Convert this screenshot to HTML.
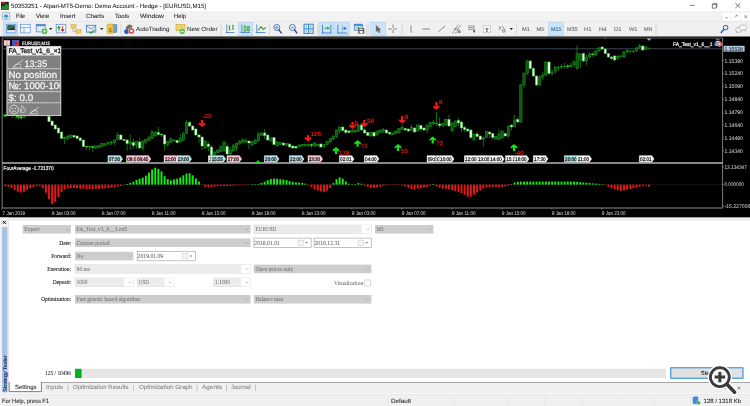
<!DOCTYPE html>
<html lang="en"><head><meta charset="utf-8"><title>50353251 - Alpari-MT5-Demo: Demo Account - Hedge - [EURUSD,M15]</title>
<style>html,body{margin:0;padding:0;background:#fff;overflow:hidden}svg{display:block;will-change:transform;transform:translateZ(0)}</style></head>
<body><svg width="750" height="406" viewBox="0 0 750 406" text-rendering="geometricPrecision">
<rect x="0" y="0" width="750" height="11" fill="#ffffff" />
<rect x="0" y="11.2" width="750" height="10.3" fill="#f2f2f2" />
<rect x="0" y="21.5" width="750" height="15.5" fill="#f0f0f0" />
<line x1="0" y1="21.5" x2="750" y2="21.5" stroke="#e2e2e2" stroke-width="0.6" />
<rect x="1" y="1.8" width="7.8" height="8" fill="#16221a" />
<path d="M1.5 8 L3 5 L4.5 6.5 L6 3 L7.5 5 L8.7 3.5 L8.7 9.5 L1.5 9.5Z" fill="#2a8c2a"/>
<path d="M1.5 5 L3 3 L4.5 4.2 L5.5 2.5 L5.5 2 L1.5 2Z" fill="#b03030"/>
<text x="11" y="8" font-size="6" fill="#222" font-family="Liberation Sans, sans-serif" stroke="#222" stroke-width="0.06" textLength="195" lengthAdjust="spacingAndGlyphs" >50353251 - Alpari-MT5-Demo: Demo Account - Hedge - [EURUSD,M15]</text>
<line x1="689.7" y1="5.4" x2="694.7" y2="5.4" stroke="#333" stroke-width="0.6" />
<rect x="712.2" y="4.2" width="3.9" height="3.9" fill="none" stroke="#333" stroke-width="0.6" />
<path d="M713.2 4.2V3.3H717V7.1H716.1" fill="none" stroke="#333" stroke-width="0.5"/>
<path d="M735.4 3.2L740.3 8M740.3 3.2L735.4 8" stroke="#333" stroke-width="0.7"/>
<rect x="2.2" y="12.3" width="7.6" height="7.6" fill="#dfe8f2" stroke="#8a9bb0" stroke-width="0.6" rx="1"/>
<circle cx="6" cy="16.6" r="2.2" fill="#3d8fd0"/><path d="M4 17.5h4" stroke="#e8c84a" stroke-width="1"/>
<text x="16" y="18.1" font-size="6" fill="#222" font-family="Liberation Sans, sans-serif" stroke="#222" stroke-width="0.06" textLength="9" lengthAdjust="spacingAndGlyphs" >File</text>
<text x="36" y="18.1" font-size="6" fill="#222" font-family="Liberation Sans, sans-serif" stroke="#222" stroke-width="0.06" textLength="13" lengthAdjust="spacingAndGlyphs" >View</text>
<text x="60" y="18.1" font-size="6" fill="#222" font-family="Liberation Sans, sans-serif" stroke="#222" stroke-width="0.06" textLength="15.5" lengthAdjust="spacingAndGlyphs" >Insert</text>
<text x="86" y="18.1" font-size="6" fill="#222" font-family="Liberation Sans, sans-serif" stroke="#222" stroke-width="0.06" textLength="18" lengthAdjust="spacingAndGlyphs" >Charts</text>
<text x="115" y="18.1" font-size="6" fill="#222" font-family="Liberation Sans, sans-serif" stroke="#222" stroke-width="0.06" textLength="14" lengthAdjust="spacingAndGlyphs" >Tools</text>
<text x="140" y="18.1" font-size="6" fill="#222" font-family="Liberation Sans, sans-serif" stroke="#222" stroke-width="0.06" textLength="24" lengthAdjust="spacingAndGlyphs" >Window</text>
<text x="174" y="18.1" font-size="6" fill="#222" font-family="Liberation Sans, sans-serif" stroke="#222" stroke-width="0.06" textLength="12" lengthAdjust="spacingAndGlyphs" >Help</text>
<rect x="723" y="12.8" width="7.8" height="8" fill="#fff" />
<rect x="731.9" y="12.8" width="8" height="8" fill="#fff" />
<rect x="741" y="12.8" width="9" height="8" fill="#fff" />
<line x1="725.4" y1="17.9" x2="727.8" y2="17.9" stroke="#6a86a8" stroke-width="0.8" />
<path d="M734.6 17.6l2.4-2.4M735.6 15h1.6v1.6" fill="none" stroke="#6a86a8" stroke-width="0.7"/>
<path d="M744.4 15.4L747 18M747 15.4L744.4 18" stroke="#5a7a9e" stroke-width="0.8"/>
<rect x="3.6" y="22.6" width="14.000000000000002" height="13.2" fill="#cce4f7" stroke="#9ccaf0" stroke-width="0.5" />
<rect x="6.3" y="24.3" width="9.6" height="8.6" fill="#e8f0fa" stroke="#4a86c8" stroke-width="0.7" />
<rect x="7.3" y="25.3" width="7.6" height="4.8" fill="#2a3a3a" />
<path d="M7.8 29 L9.5 26.8 L11 28.2 L12.6 26.2 L14.4 27.6" fill="none" stroke="#5ad05a" stroke-width="0.7"/>
<rect x="20.6" y="24.3" width="9.6" height="8.6" fill="#f4f8fd" stroke="#5a96d8" stroke-width="0.7" />
<line x1="20.6" y1="27.6" x2="30.2" y2="27.6" stroke="#5a96d8" stroke-width="0.7" />
<line x1="24" y1="27.6" x2="24" y2="32.9" stroke="#5a96d8" stroke-width="0.7" />
<rect x="36.2" y="24.3" width="9" height="7.6" fill="#dce9f7" stroke="#4a86c8" stroke-width="0.7" />
<rect x="36.2" y="24.3" width="9" height="1.8" fill="#4a86c8" />
<circle cx="44.5" cy="31.2" r="3" fill="#35b035" stroke="#fff" stroke-width="0.4"/><path d="M42.8 31.2h3.4M44.5 29.5v3.4" stroke="#fff" stroke-width="0.8"/>
<path d="M49 28 h3.4 l-1.7 2z" fill="#222"/>
<rect x="56.2" y="24.3" width="9.6" height="8.6" fill="#f4f8fd" stroke="#4a86c8" stroke-width="0.7" />
<path d="M59 31.5v-5M57.6 28l1.4-1.8 1.4 1.8z" stroke="#2aa02a" stroke-width="0.9" fill="#2aa02a"/>
<path d="M62.6 26v5M61.2 29.6l1.4 1.8 1.4-1.8z" stroke="#d03030" stroke-width="0.9" fill="#d03030"/>
<rect x="71" y="24.6" width="5" height="3.6" fill="#f0d060" stroke="#c8a030" stroke-width="0.5" />
<rect x="76" y="29.6" width="5" height="3.6" fill="#f0d060" stroke="#c8a030" stroke-width="0.5" />
<path d="M73 28.2v3.2h3" fill="none" stroke="#888" stroke-width="0.5"/>
<rect x="86.4" y="25.3" width="9.4" height="6.8" fill="#e6f0fb" stroke="#3a7ac8" stroke-width="0.8" />
<path d="M86.4 26l4.7 3 4.7-3" fill="none" stroke="#3a7ac8" stroke-width="0.7"/>
<path d="M89 31.6l2 1.6 3.6-3.6" fill="none" stroke="#2aa02a" stroke-width="1.1"/>
<path d="M100 28 h3.4 l-1.7 2z" fill="#222"/>
<rect x="110.6" y="24.4" width="6.2" height="8" fill="#6aa0e0" stroke="#3a6ab0" stroke-width="0.5" rx="0.8"/>
<rect x="107.2" y="24" width="6" height="9.4" fill="#f0c848" stroke="#c09420" stroke-width="0.5" rx="0.8"/>
<text x="108.6" y="31.6" font-size="6" fill="#b07c00" font-family="Liberation Sans, sans-serif" font-weight="bold" >$</text>
<line x1="121" y1="23.5" x2="121" y2="35" stroke="#c8c8c8" stroke-width="0.6" />
<path d="M125.6 27.4 l3.6-3 3.4 1.4 -1 3 -5 0.6z" fill="#6a6a6a"/><path d="M126.6 25.8l3.2-1.6" stroke="#9a9a9a" stroke-width="0.6"/>
<circle cx="126.6" cy="31.4" r="2.5" fill="#2a62c8"/>
<circle cx="131.4" cy="31" r="3" fill="#e02818" stroke="#fff" stroke-width="0.5"/><rect x="130.2" y="29.8" width="2.4" height="2.4" fill="#fff"/>
<text x="136" y="31" font-size="6" fill="#333" font-family="Liberation Sans, sans-serif" stroke="#333" stroke-width="0.06" textLength="33.5" lengthAdjust="spacingAndGlyphs" >AutoTrading</text>
<rect x="176" y="24.5" width="9" height="6.2" fill="#ecd468" stroke="#c8a838" stroke-width="0.6" />
<circle cx="182.2" cy="31.4" r="2.8" fill="#35b035" stroke="#fff" stroke-width="0.4"/><path d="M180.6 31.4h3.2M182.2 29.8v3.2" stroke="#fff" stroke-width="0.8"/>
<text x="187" y="31" font-size="6" fill="#333" font-family="Liberation Sans, sans-serif" stroke="#333" stroke-width="0.06" textLength="30.5" lengthAdjust="spacingAndGlyphs" >New Order</text>
<line x1="221" y1="23.5" x2="221" y2="35" stroke="#c8c8c8" stroke-width="0.6" />
<path d="M226.8 24.4v8.8M225.6 32.5h8.8" stroke="#3a7ac8" stroke-width="0.8" fill="none"/>
<path d="M229.6 25.4v5M228.6 26.6h1M229.6 29.4h1M233 24.8v5M232 25.8h1M233 28.8h1" stroke="#2aa02a" stroke-width="1" fill="none"/>
<rect x="238.7" y="22.6" width="14.100000000000023" height="13.2" fill="#cce4f7" stroke="#9ccaf0" stroke-width="0.5" />
<path d="M241.8 24.4v8.8M240.6 32.5h9.4" stroke="#3a7ac8" stroke-width="0.8" fill="none"/>
<rect x="244.1" y="26.3" width="1.9" height="4.8" fill="#eaf8ea" stroke="#2aa02a" stroke-width="0.7" />
<line x1="245.05" y1="25" x2="245.05" y2="32" stroke="#2aa02a" stroke-width="0.6" />
<rect x="247.6" y="26.8" width="1.9" height="4" fill="#eaf8ea" stroke="#2aa02a" stroke-width="0.7" />
<line x1="248.55" y1="25.6" x2="248.55" y2="31.6" stroke="#2aa02a" stroke-width="0.6" />
<path d="M256.8 24.4v8.8M255.6 32.5h9.8" stroke="#3a7ac8" stroke-width="0.8" fill="none"/>
<path d="M258.4 30.2l2.6-3.6 2.5 2.8 2.2-2" stroke="#2aa02a" stroke-width="1.1" fill="none"/>
<line x1="269.5" y1="23.5" x2="269.5" y2="35" stroke="#c8c8c8" stroke-width="0.6" />
<circle cx="276.8" cy="27.5" r="3" fill="#e8f2fc" stroke="#3a6ab8" stroke-width="0.9"/>
<path d="M279.0 29.9l2.2 3" stroke="#2a4a90" stroke-width="1.5" stroke-linecap="round"/>
<path d="M275.2 27.6h3.2M276.8 26v3.2" stroke="#3a6ab8" stroke-width="0.7"/>
<circle cx="292.4" cy="27.5" r="3" fill="#e8f2fc" stroke="#3a6ab8" stroke-width="0.9"/>
<path d="M294.59999999999997 29.9l2.2 3" stroke="#2a4a90" stroke-width="1.5" stroke-linecap="round"/>
<path d="M290.79999999999995 27.6h3.2" stroke="#3a6ab8" stroke-width="0.7"/>
<rect x="304" y="24.2" width="9.2" height="9.2" fill="#e4f0fc" stroke="#2f80dc" stroke-width="1" />
<line x1="308.6" y1="24.2" x2="308.6" y2="33.4" stroke="#2f80dc" stroke-width="1" />
<line x1="304" y1="28.8" x2="313.2" y2="28.8" stroke="#2f80dc" stroke-width="1" />
<path d="M305.3 27.3l1.8-1.6" stroke="#3aa03a" stroke-width="0.8"/>
<path d="M309.9 27.3l1.8-1.6" stroke="#3aa03a" stroke-width="0.8"/>
<path d="M305.3 31.900000000000002l1.8-1.6" stroke="#3aa03a" stroke-width="0.8"/>
<path d="M309.9 31.900000000000002l1.8-1.6" stroke="#3aa03a" stroke-width="0.8"/>
<line x1="317.5" y1="23.5" x2="317.5" y2="35" stroke="#c8c8c8" stroke-width="0.6" />
<rect x="319.1" y="22.6" width="14.399999999999977" height="13.2" fill="#cce4f7" stroke="#9ccaf0" stroke-width="0.5" />
<path d="M322.5 24.8v8.4M330.8 24.8v8.4M321.6 33h10" stroke="#3a7ac8" stroke-width="0.9" fill="none"/><path d="M324.6 28.2h3" stroke="#2aa02a" stroke-width="1"/><path d="M327.2 26.6l2.6 1.6-2.6 1.6z" fill="#2aa02a"/>
<rect x="334.8" y="22.6" width="14.0" height="13.2" fill="#cce4f7" stroke="#9ccaf0" stroke-width="0.5" />
<path d="M337.9 24.6v8.6M337 33h10" stroke="#3a7ac8" stroke-width="0.9" fill="none"/><path d="M342.4 25v7.6" stroke="#7aa8e0" stroke-width="0.7"/><path d="M343 28.4h2" stroke="#2a6ad0" stroke-width="1"/><path d="M344.4 26.8l2.6 1.6-2.6 1.6z" fill="#2a6ad0"/>
<line x1="350" y1="23.5" x2="350" y2="35" stroke="#c8c8c8" stroke-width="0.6" />
<rect x="354.3" y="24.2" width="8" height="6" fill="#d4e6fa" stroke="#3a80d8" stroke-width="0.8" />
<rect x="354.3" y="24.2" width="8" height="1.6" fill="#3a80d8" />
<path d="M356 28.4l2-1.6 1.6 1 2-1.6" fill="none" stroke="#3aa03a" stroke-width="0.7"/>
<rect x="358.4" y="28.4" width="5.6" height="5" fill="#6a6a6a" stroke="#4a4a4a" stroke-width="0.5" />
<rect x="359.6" y="31" width="3.2" height="2.4" fill="#f0f0f0" />
<rect x="359.6" y="28.6" width="3" height="1.4" fill="#d8d8d8" />
<line x1="366.9" y1="23.5" x2="366.9" y2="35" stroke="#c8c8c8" stroke-width="0.6" />
<line x1="368.3" y1="23.5" x2="368.3" y2="35" stroke="#c8c8c8" stroke-width="0.6" />
<rect x="370.8" y="22.6" width="14.599999999999966" height="13.2" fill="#cce4f7" stroke="#9ccaf0" stroke-width="0.5" />
<path d="M376.2 25.6l0 6 1.5-1.3 1.1 2.4 1-0.5-1.1-2.3 1.9-0.1z" fill="#6a6a6a" stroke="#444" stroke-width="0.4"/>
<path d="M393 24.6v8.8M388.4 29h9.2" stroke="#444" stroke-width="0.6" stroke-dasharray="3.4 1.8"/>
<line x1="402" y1="23.5" x2="402" y2="35" stroke="#c8c8c8" stroke-width="0.6" />
<line x1="411" y1="25.6" x2="411" y2="32.6" stroke="#555" stroke-width="0.7" />
<line x1="422.5" y1="29" x2="430" y2="29" stroke="#555" stroke-width="0.7" />
<line x1="438.5" y1="31.8" x2="445" y2="26" stroke="#555" stroke-width="0.7" />
<path d="M452.6 33.4l5.4-8.6M455.6 33.4l5.2-8.6" stroke="#444" stroke-width="0.7" stroke-dasharray="1.6 0.7"/><path d="M454 29h4" stroke="#444" stroke-width="0.6"/>
<text x="458.2" y="33.4" font-size="3.6" fill="#222" font-family="Liberation Sans, sans-serif" font-weight="bold" >E</text>
<path d="M468 26h7M468 27.7h7M468 29.4h7" stroke="#9a9a9a" stroke-width="1"/><path d="M472.8 30.6h2.6l-1.3 2.4z" fill="#333"/>
<rect x="483.5" y="25.6" width="7" height="7" fill="#fafafa" stroke="#888" stroke-width="0.6" stroke-dasharray="0.8 0.6"/>
<text x="485.3" y="31.6" font-size="5.6" fill="#333" font-family="Liberation Sans, sans-serif" stroke="#333" stroke-width="0.06" font-weight="bold" >T</text>
<path d="M498.8 26.4l2.2 1.6-2.2 1.6" fill="none" stroke="#555" stroke-width="0.7"/><circle cx="503.8" cy="30.8" r="1.4" fill="none" stroke="#555" stroke-width="0.7"/><path d="M502 26.2l2.2 2.2" stroke="#555" stroke-width="0.7"/>
<path d="M509.6 28 h3.4 l-1.7 2z" fill="#222"/>
<line x1="516.5" y1="23.5" x2="516.5" y2="35" stroke="#c8c8c8" stroke-width="0.6" />
<rect x="548.6" y="22.6" width="14.799999999999955" height="13.2" fill="#cce4f7" stroke="#9ccaf0" stroke-width="0.5" />
<text x="522" y="31" font-size="5.6" fill="#666" font-family="Liberation Sans, sans-serif" stroke="#666" stroke-width="0.06" textLength="8" lengthAdjust="spacingAndGlyphs" >M1</text>
<text x="536.5" y="31" font-size="5.6" fill="#666" font-family="Liberation Sans, sans-serif" stroke="#666" stroke-width="0.06" textLength="8.0" lengthAdjust="spacingAndGlyphs" >M5</text>
<text x="551" y="31" font-size="5.6" fill="#2a5a9a" font-family="Liberation Sans, sans-serif" stroke="#2a5a9a" stroke-width="0.06" textLength="10.5" lengthAdjust="spacingAndGlyphs" >M15</text>
<text x="567" y="31" font-size="5.6" fill="#666" font-family="Liberation Sans, sans-serif" stroke="#666" stroke-width="0.06" textLength="10.5" lengthAdjust="spacingAndGlyphs" >M30</text>
<text x="584" y="31" font-size="5.6" fill="#666" font-family="Liberation Sans, sans-serif" stroke="#666" stroke-width="0.06" textLength="7.5" lengthAdjust="spacingAndGlyphs" >H1</text>
<text x="599" y="31" font-size="5.6" fill="#666" font-family="Liberation Sans, sans-serif" stroke="#666" stroke-width="0.06" textLength="7.5" lengthAdjust="spacingAndGlyphs" >H4</text>
<text x="614" y="31" font-size="5.6" fill="#666" font-family="Liberation Sans, sans-serif" stroke="#666" stroke-width="0.06" textLength="7.5" lengthAdjust="spacingAndGlyphs" >D1</text>
<text x="629" y="31" font-size="5.6" fill="#666" font-family="Liberation Sans, sans-serif" stroke="#666" stroke-width="0.06" textLength="8.5" lengthAdjust="spacingAndGlyphs" >W1</text>
<text x="644" y="31" font-size="5.6" fill="#666" font-family="Liberation Sans, sans-serif" stroke="#666" stroke-width="0.06" textLength="8.5" lengthAdjust="spacingAndGlyphs" >MN</text>
<line x1="656" y1="23.5" x2="656" y2="35" stroke="#c8c8c8" stroke-width="0.6" />
<circle cx="725.6" cy="27.6" r="2.3" fill="#eaf2fc" stroke="#2a5ab8" stroke-width="1"/><path d="M723.8 29.6l-2.6 3" stroke="#2a5ab8" stroke-width="1.5" stroke-linecap="round"/>
<ellipse cx="739" cy="29.8" rx="3.4" ry="2.6" fill="#f4f4f4" stroke="#999" stroke-width="0.6"/><path d="M737 31.6l-0.8 2 2.2-1.4z" fill="#bbb"/>
<ellipse cx="743" cy="27.6" rx="3.6" ry="2.8" fill="#fafafa" stroke="#999" stroke-width="0.6"/><path d="M744 30l1.4 2 0.4-2.2z" fill="#bbb"/>
<rect x="0" y="36.5" width="750" height="181.5" fill="#000" />
<line x1="2" y1="38" x2="722.6" y2="38" stroke="#707070" stroke-width="0.8" />
<line x1="603.6" y1="38" x2="606.4" y2="38" stroke="#d04040" stroke-width="0.8" />
<line x1="2.2" y1="38" x2="2.2" y2="208" stroke="#9a9a9a" stroke-width="0.8" />
<line x1="722.6" y1="38" x2="722.6" y2="208" stroke="#9a9a9a" stroke-width="0.8" />
<line x1="2" y1="163" x2="722.6" y2="163" stroke="#b4b4b4" stroke-width="1.3" />
<line x1="2" y1="208" x2="722.6" y2="208" stroke="#9a9a9a" stroke-width="0.9" />
<line x1="2.5" y1="48.8" x2="722.6" y2="48.8" stroke="#485664" stroke-width="0.8" />
<rect x="4" y="40.3" width="5.9" height="5.2" fill="#f6d4dc" stroke="#dc98a4" stroke-width="0.5" />
<line x1="7" y1="40.3" x2="7" y2="45.5" stroke="#c86878" stroke-width="0.6" />
<rect x="12.4" y="40.3" width="6.6" height="5.2" fill="#3a50c8" stroke="#6a80e0" stroke-width="0.5" />
<rect x="15.8" y="41" width="3" height="4.3" fill="#d03030" />
<text x="22" y="44.9" font-size="4.8" fill="#f0f0f0" font-family="Liberation Sans, sans-serif" stroke="#f0f0f0" stroke-width="0.2" textLength="28" lengthAdjust="spacingAndGlyphs" >EURUSD,M15</text>
<g id="candles">
<line x1="2.9" y1="113.4" x2="2.9" y2="117.2" stroke="#12a012" stroke-width="0.7" />
<rect x="4.1" y="114.4" width="1.9" height="2.2" fill="#0c560c" stroke="#1da01d" stroke-width="0.5" />
<rect x="11.8" y="116.6" width="1.6" height="1" fill="#1da01d" />
<rect x="14.8" y="117.6" width="1.6" height="1" fill="#1da01d" />
<rect x="17.8" y="118.2" width="1.6" height="1" fill="#1da01d" />
<rect x="20.6" y="118" width="1.6" height="1" fill="#1da01d" />
<line x1="5.25" y1="115.02" x2="5.25" y2="116.12" stroke="#12a012" stroke-width="0.7" />
<rect x="4.1" y="115.32" width="2.3" height="0.7" fill="#ecffec" stroke="#3cc43c" stroke-width="0.5" />
<line x1="17.75" y1="113.87" x2="17.75" y2="117.25" stroke="#12a012" stroke-width="0.7" />
<rect x="16.6" y="116.43" width="2.3" height="0.7" fill="#ecffec" stroke="#3cc43c" stroke-width="0.5" />
<line x1="20.88" y1="114.33" x2="20.88" y2="118.03" stroke="#12a012" stroke-width="0.7" />
<rect x="19.73" y="116.93" width="2.3" height="0.78" fill="#ecffec" stroke="#3cc43c" stroke-width="0.5" />
<line x1="24.0" y1="114.22" x2="24.0" y2="118.03" stroke="#12a012" stroke-width="0.7" />
<rect x="22.85" y="115.97" width="2.3" height="1.74" fill="#0c560c" stroke="#1da01d" stroke-width="0.5" />
<line x1="49.0" y1="116.1" x2="49.0" y2="121.9" stroke="#12a012" stroke-width="0.7" />
<rect x="47.85" y="116.5" width="2.3" height="5.0" fill="#ecffec" stroke="#3cc43c" stroke-width="0.5" />
<line x1="52.12" y1="120.6" x2="52.12" y2="125.9" stroke="#12a012" stroke-width="0.7" />
<rect x="50.98" y="121" width="2.3" height="4.5" fill="#ecffec" stroke="#3cc43c" stroke-width="0.5" />
<line x1="55.25" y1="124.6" x2="55.25" y2="129.4" stroke="#12a012" stroke-width="0.7" />
<rect x="54.1" y="125" width="2.3" height="4" fill="#ecffec" stroke="#3cc43c" stroke-width="0.5" />
<line x1="58.38" y1="127.6" x2="58.38" y2="133.4" stroke="#12a012" stroke-width="0.7" />
<rect x="57.23" y="128" width="2.3" height="5" fill="#ecffec" stroke="#3cc43c" stroke-width="0.5" />
<line x1="61.5" y1="131.6" x2="61.5" y2="138.9" stroke="#12a012" stroke-width="0.7" />
<rect x="60.35" y="132" width="2.3" height="6.5" fill="#ecffec" stroke="#3cc43c" stroke-width="0.5" />
<line x1="64.62" y1="136.5" x2="64.62" y2="144" stroke="#12a012" stroke-width="0.7" />
<rect x="63.48" y="137.6" width="2.3" height="0.8" fill="#0c560c" stroke="#1da01d" stroke-width="0.5" />
<line x1="67.75" y1="135.5" x2="67.75" y2="140" stroke="#12a012" stroke-width="0.7" />
<rect x="66.6" y="136" width="2.3" height="2.5" fill="#0c560c" stroke="#1da01d" stroke-width="0.5" />
<line x1="70.88" y1="134.5" x2="70.88" y2="138" stroke="#12a012" stroke-width="0.7" />
<rect x="69.72" y="135" width="2.3" height="2.5" fill="#0c560c" stroke="#1da01d" stroke-width="0.5" />
<line x1="74.0" y1="135" x2="74.0" y2="138" stroke="#12a012" stroke-width="0.7" />
<rect x="72.85" y="135.5" width="2.3" height="1.5" fill="#ecffec" stroke="#3cc43c" stroke-width="0.5" />
<line x1="77.12" y1="135.5" x2="77.12" y2="139" stroke="#12a012" stroke-width="0.7" />
<rect x="75.97" y="136" width="2.3" height="2.5" fill="#ecffec" stroke="#3cc43c" stroke-width="0.5" />
<line x1="80.25" y1="137.5" x2="80.25" y2="141" stroke="#12a012" stroke-width="0.7" />
<rect x="79.1" y="138" width="2.3" height="2.5" fill="#ecffec" stroke="#3cc43c" stroke-width="0.5" />
<line x1="83.38" y1="139.5" x2="83.38" y2="147" stroke="#12a012" stroke-width="0.7" />
<rect x="82.22" y="140" width="2.3" height="6.5" fill="#ecffec" stroke="#3cc43c" stroke-width="0.5" />
<line x1="86.5" y1="146" x2="86.5" y2="150" stroke="#12a012" stroke-width="0.7" />
<rect x="85.35" y="146.2" width="2.3" height="0.7" fill="#ecffec" stroke="#3cc43c" stroke-width="0.5" />
<line x1="89.62" y1="146" x2="89.62" y2="150" stroke="#12a012" stroke-width="0.7" />
<rect x="88.47" y="146.2" width="2.3" height="0.7" fill="#0c560c" stroke="#1da01d" stroke-width="0.5" />
<line x1="92.75" y1="146" x2="92.75" y2="152" stroke="#12a012" stroke-width="0.7" />
<rect x="91.6" y="146.6" width="2.3" height="0.7" fill="#ecffec" stroke="#3cc43c" stroke-width="0.5" />
<line x1="95.88" y1="145.5" x2="95.88" y2="149" stroke="#12a012" stroke-width="0.7" />
<rect x="94.72" y="146" width="2.3" height="2" fill="#0c560c" stroke="#1da01d" stroke-width="0.5" />
<line x1="99.0" y1="145" x2="99.0" y2="148" stroke="#12a012" stroke-width="0.7" />
<rect x="97.85" y="145.5" width="2.3" height="2.0" fill="#0c560c" stroke="#1da01d" stroke-width="0.5" />
<line x1="102.12" y1="143" x2="102.12" y2="147" stroke="#12a012" stroke-width="0.7" />
<rect x="100.97" y="143.5" width="2.3" height="3.0" fill="#0c560c" stroke="#1da01d" stroke-width="0.5" />
<line x1="105.25" y1="143" x2="105.25" y2="146" stroke="#12a012" stroke-width="0.7" />
<rect x="104.1" y="143.8" width="2.3" height="1.4" fill="#0c560c" stroke="#1da01d" stroke-width="0.5" />
<line x1="108.38" y1="142" x2="108.38" y2="145" stroke="#12a012" stroke-width="0.7" />
<rect x="107.22" y="142.7" width="2.3" height="0.7" fill="#0c560c" stroke="#1da01d" stroke-width="0.5" />
<line x1="111.5" y1="141" x2="111.5" y2="145" stroke="#12a012" stroke-width="0.7" />
<rect x="110.35" y="142.2" width="2.3" height="0.7" fill="#0c560c" stroke="#1da01d" stroke-width="0.5" />
<line x1="114.62" y1="139.5" x2="114.62" y2="145" stroke="#12a012" stroke-width="0.7" />
<rect x="113.47" y="140" width="2.3" height="2.5" fill="#0c560c" stroke="#1da01d" stroke-width="0.5" />
<line x1="117.75" y1="132" x2="117.75" y2="140" stroke="#12a012" stroke-width="0.7" />
<rect x="116.6" y="135" width="2.3" height="4.5" fill="#0c560c" stroke="#1da01d" stroke-width="0.5" />
<line x1="120.88" y1="134.5" x2="120.88" y2="140" stroke="#12a012" stroke-width="0.7" />
<rect x="119.72" y="135" width="2.3" height="4.5" fill="#ecffec" stroke="#3cc43c" stroke-width="0.5" />
<line x1="124.0" y1="139" x2="124.0" y2="141" stroke="#12a012" stroke-width="0.7" />
<rect x="122.85" y="139.5" width="2.3" height="1.0" fill="#ecffec" stroke="#3cc43c" stroke-width="0.5" />
<line x1="127.12" y1="139.5" x2="127.12" y2="151" stroke="#12a012" stroke-width="0.7" />
<rect x="125.97" y="140" width="2.3" height="3.5" fill="#ecffec" stroke="#3cc43c" stroke-width="0.5" />
<line x1="130.25" y1="134.5" x2="130.25" y2="150" stroke="#12a012" stroke-width="0.7" />
<rect x="129.1" y="142" width="2.3" height="2" fill="#0c560c" stroke="#1da01d" stroke-width="0.5" />
<line x1="133.38" y1="139" x2="133.38" y2="149" stroke="#12a012" stroke-width="0.7" />
<rect x="132.22" y="142.5" width="2.3" height="3.0" fill="#ecffec" stroke="#3cc43c" stroke-width="0.5" />
<line x1="136.5" y1="141" x2="136.5" y2="148.5" stroke="#12a012" stroke-width="0.7" />
<rect x="135.35" y="141.5" width="2.3" height="3.5" fill="#0c560c" stroke="#1da01d" stroke-width="0.5" />
<line x1="139.62" y1="138" x2="139.62" y2="148.5" stroke="#12a012" stroke-width="0.7" />
<rect x="138.47" y="142" width="2.3" height="6" fill="#ecffec" stroke="#3cc43c" stroke-width="0.5" />
<line x1="142.75" y1="139.5" x2="142.75" y2="151" stroke="#12a012" stroke-width="0.7" />
<rect x="141.6" y="141.5" width="2.3" height="6.5" fill="#0c560c" stroke="#1da01d" stroke-width="0.5" />
<line x1="145.88" y1="139" x2="145.88" y2="144.5" stroke="#12a012" stroke-width="0.7" />
<rect x="144.72" y="139.5" width="2.3" height="2.5" fill="#0c560c" stroke="#1da01d" stroke-width="0.5" />
<line x1="149.0" y1="136.5" x2="149.0" y2="141" stroke="#12a012" stroke-width="0.7" />
<rect x="147.85" y="137" width="2.3" height="3.5" fill="#0c560c" stroke="#1da01d" stroke-width="0.5" />
<line x1="152.12" y1="130" x2="152.12" y2="139" stroke="#12a012" stroke-width="0.7" />
<rect x="150.97" y="132" width="2.3" height="6.5" fill="#0c560c" stroke="#1da01d" stroke-width="0.5" />
<line x1="155.25" y1="131.5" x2="155.25" y2="136.5" stroke="#12a012" stroke-width="0.7" />
<rect x="154.1" y="132" width="2.3" height="4" fill="#0c560c" stroke="#1da01d" stroke-width="0.5" />
<line x1="158.38" y1="127" x2="158.38" y2="135" stroke="#12a012" stroke-width="0.7" />
<rect x="157.22" y="132.5" width="2.3" height="2.0" fill="#ecffec" stroke="#3cc43c" stroke-width="0.5" />
<line x1="161.5" y1="133" x2="161.5" y2="137" stroke="#12a012" stroke-width="0.7" />
<rect x="160.35" y="134.2" width="2.3" height="0.7" fill="#ecffec" stroke="#3cc43c" stroke-width="0.5" />
<line x1="164.62" y1="134.5" x2="164.62" y2="150.5" stroke="#12a012" stroke-width="0.7" />
<rect x="163.47" y="135" width="2.3" height="9" fill="#ecffec" stroke="#3cc43c" stroke-width="0.5" />
<line x1="167.75" y1="141" x2="167.75" y2="147" stroke="#12a012" stroke-width="0.7" />
<rect x="166.6" y="141.5" width="2.3" height="3.0" fill="#0c560c" stroke="#1da01d" stroke-width="0.5" />
<line x1="170.88" y1="137" x2="170.88" y2="143" stroke="#12a012" stroke-width="0.7" />
<rect x="169.72" y="139" width="2.3" height="3.5" fill="#0c560c" stroke="#1da01d" stroke-width="0.5" />
<line x1="174.0" y1="139.5" x2="174.0" y2="141.5" stroke="#12a012" stroke-width="0.7" />
<rect x="172.85" y="140" width="2.3" height="1" fill="#0c560c" stroke="#1da01d" stroke-width="0.5" />
<line x1="177.12" y1="140" x2="177.12" y2="143" stroke="#12a012" stroke-width="0.7" />
<rect x="175.97" y="140.5" width="2.3" height="2.0" fill="#ecffec" stroke="#3cc43c" stroke-width="0.5" />
<line x1="180.25" y1="134" x2="180.25" y2="142.5" stroke="#12a012" stroke-width="0.7" />
<rect x="179.1" y="138.5" width="2.3" height="3.5" fill="#0c560c" stroke="#1da01d" stroke-width="0.5" />
<line x1="183.38" y1="132.5" x2="183.38" y2="141" stroke="#12a012" stroke-width="0.7" />
<rect x="182.22" y="133" width="2.3" height="7.5" fill="#0c560c" stroke="#1da01d" stroke-width="0.5" />
<line x1="186.5" y1="120" x2="186.5" y2="134" stroke="#12a012" stroke-width="0.7" />
<rect x="185.35" y="122.5" width="2.3" height="11.0" fill="#0c560c" stroke="#1da01d" stroke-width="0.5" />
<line x1="189.62" y1="121" x2="189.62" y2="126.5" stroke="#12a012" stroke-width="0.7" />
<rect x="188.47" y="122.5" width="2.3" height="3.5" fill="#ecffec" stroke="#3cc43c" stroke-width="0.5" />
<line x1="192.75" y1="125.5" x2="192.75" y2="130.5" stroke="#12a012" stroke-width="0.7" />
<rect x="191.6" y="126" width="2.3" height="4" fill="#ecffec" stroke="#3cc43c" stroke-width="0.5" />
<line x1="195.88" y1="128.5" x2="195.88" y2="135.5" stroke="#12a012" stroke-width="0.7" />
<rect x="194.72" y="129" width="2.3" height="6" fill="#ecffec" stroke="#3cc43c" stroke-width="0.5" />
<line x1="199.0" y1="134.5" x2="199.0" y2="143" stroke="#12a012" stroke-width="0.7" />
<rect x="197.85" y="135" width="2.3" height="2" fill="#ecffec" stroke="#3cc43c" stroke-width="0.5" />
<line x1="202.12" y1="136.5" x2="202.12" y2="150" stroke="#12a012" stroke-width="0.7" />
<rect x="200.97" y="137" width="2.3" height="9" fill="#ecffec" stroke="#3cc43c" stroke-width="0.5" />
<line x1="205.25" y1="140.5" x2="205.25" y2="148.5" stroke="#12a012" stroke-width="0.7" />
<rect x="204.1" y="141" width="2.3" height="7" fill="#0c560c" stroke="#1da01d" stroke-width="0.5" />
<line x1="208.38" y1="142" x2="208.38" y2="151" stroke="#12a012" stroke-width="0.7" />
<rect x="207.22" y="144" width="2.3" height="2.5" fill="#ecffec" stroke="#3cc43c" stroke-width="0.5" />
<line x1="211.5" y1="145" x2="211.5" y2="155.5" stroke="#12a012" stroke-width="0.7" />
<rect x="210.35" y="147" width="2.3" height="8" fill="#ecffec" stroke="#3cc43c" stroke-width="0.5" />
<line x1="214.62" y1="151.5" x2="214.62" y2="155" stroke="#12a012" stroke-width="0.7" />
<rect x="213.47" y="152" width="2.3" height="2.5" fill="#0c560c" stroke="#1da01d" stroke-width="0.5" />
<line x1="217.75" y1="149.5" x2="217.75" y2="153" stroke="#12a012" stroke-width="0.7" />
<rect x="216.6" y="150" width="2.3" height="2.5" fill="#0c560c" stroke="#1da01d" stroke-width="0.5" />
<line x1="220.88" y1="145" x2="220.88" y2="152" stroke="#12a012" stroke-width="0.7" />
<rect x="219.72" y="147" width="2.3" height="4.5" fill="#0c560c" stroke="#1da01d" stroke-width="0.5" />
<line x1="224.0" y1="141.5" x2="224.0" y2="151.5" stroke="#12a012" stroke-width="0.7" />
<rect x="222.85" y="142" width="2.3" height="9" fill="#0c560c" stroke="#1da01d" stroke-width="0.5" />
<line x1="227.12" y1="143" x2="227.12" y2="154.5" stroke="#12a012" stroke-width="0.7" />
<rect x="225.97" y="146.5" width="2.3" height="7.5" fill="#ecffec" stroke="#3cc43c" stroke-width="0.5" />
<line x1="230.25" y1="147" x2="230.25" y2="155" stroke="#12a012" stroke-width="0.7" />
<rect x="229.1" y="150" width="2.3" height="4" fill="#0c560c" stroke="#1da01d" stroke-width="0.5" />
<line x1="233.38" y1="144.5" x2="233.38" y2="151.5" stroke="#12a012" stroke-width="0.7" />
<rect x="232.22" y="145" width="2.3" height="6" fill="#0c560c" stroke="#1da01d" stroke-width="0.5" />
<line x1="236.5" y1="143" x2="236.5" y2="151" stroke="#12a012" stroke-width="0.7" />
<rect x="235.35" y="143.5" width="2.3" height="4.5" fill="#0c560c" stroke="#1da01d" stroke-width="0.5" />
<line x1="239.62" y1="140.5" x2="239.62" y2="144.5" stroke="#12a012" stroke-width="0.7" />
<rect x="238.47" y="141" width="2.3" height="3" fill="#0c560c" stroke="#1da01d" stroke-width="0.5" />
<line x1="242.75" y1="138" x2="242.75" y2="143" stroke="#12a012" stroke-width="0.7" />
<rect x="241.6" y="140" width="2.3" height="2.5" fill="#0c560c" stroke="#1da01d" stroke-width="0.5" />
<line x1="245.88" y1="138" x2="245.88" y2="142.5" stroke="#12a012" stroke-width="0.7" />
<rect x="244.72" y="140.5" width="2.3" height="1.5" fill="#0c560c" stroke="#1da01d" stroke-width="0.5" />
<line x1="249.0" y1="140.5" x2="249.0" y2="149" stroke="#12a012" stroke-width="0.7" />
<rect x="247.85" y="141" width="2.3" height="2" fill="#ecffec" stroke="#3cc43c" stroke-width="0.5" />
<line x1="252.12" y1="141" x2="252.12" y2="145.5" stroke="#12a012" stroke-width="0.7" />
<rect x="250.97" y="141.5" width="2.3" height="3.5" fill="#0c560c" stroke="#1da01d" stroke-width="0.5" />
<line x1="255.25" y1="139.5" x2="255.25" y2="144" stroke="#12a012" stroke-width="0.7" />
<rect x="254.1" y="140" width="2.3" height="3.5" fill="#0c560c" stroke="#1da01d" stroke-width="0.5" />
<line x1="258.38" y1="132" x2="258.38" y2="141.5" stroke="#12a012" stroke-width="0.7" />
<rect x="257.23" y="134" width="2.3" height="7" fill="#0c560c" stroke="#1da01d" stroke-width="0.5" />
<line x1="261.5" y1="132.5" x2="261.5" y2="136" stroke="#12a012" stroke-width="0.7" />
<rect x="260.35" y="133" width="2.3" height="2.5" fill="#0c560c" stroke="#1da01d" stroke-width="0.5" />
<line x1="264.62" y1="129" x2="264.62" y2="139" stroke="#12a012" stroke-width="0.7" />
<rect x="263.48" y="133" width="2.3" height="2.5" fill="#ecffec" stroke="#3cc43c" stroke-width="0.5" />
<line x1="267.75" y1="134.5" x2="267.75" y2="140.5" stroke="#12a012" stroke-width="0.7" />
<rect x="266.6" y="135" width="2.3" height="5" fill="#ecffec" stroke="#3cc43c" stroke-width="0.5" />
<line x1="270.88" y1="137.5" x2="270.88" y2="141.5" stroke="#12a012" stroke-width="0.7" />
<rect x="269.73" y="138" width="2.3" height="3" fill="#0c560c" stroke="#1da01d" stroke-width="0.5" />
<line x1="274.0" y1="137" x2="274.0" y2="145" stroke="#12a012" stroke-width="0.7" />
<rect x="272.85" y="137.5" width="2.3" height="7.0" fill="#ecffec" stroke="#3cc43c" stroke-width="0.5" />
<line x1="277.12" y1="141.5" x2="277.12" y2="146.5" stroke="#12a012" stroke-width="0.7" />
<rect x="275.98" y="142" width="2.3" height="4" fill="#0c560c" stroke="#1da01d" stroke-width="0.5" />
<line x1="280.25" y1="142" x2="280.25" y2="145" stroke="#12a012" stroke-width="0.7" />
<rect x="279.1" y="142.5" width="2.3" height="2.0" fill="#0c560c" stroke="#1da01d" stroke-width="0.5" />
<line x1="283.38" y1="142.5" x2="283.38" y2="145.5" stroke="#12a012" stroke-width="0.7" />
<rect x="282.23" y="143" width="2.3" height="2" fill="#ecffec" stroke="#3cc43c" stroke-width="0.5" />
<line x1="286.5" y1="143" x2="286.5" y2="146" stroke="#12a012" stroke-width="0.7" />
<rect x="285.35" y="143.5" width="2.3" height="2.0" fill="#0c560c" stroke="#1da01d" stroke-width="0.5" />
<line x1="289.62" y1="143.5" x2="289.62" y2="147.5" stroke="#12a012" stroke-width="0.7" />
<rect x="288.48" y="144" width="2.3" height="3" fill="#ecffec" stroke="#3cc43c" stroke-width="0.5" />
<line x1="292.75" y1="145.5" x2="292.75" y2="148.5" stroke="#12a012" stroke-width="0.7" />
<rect x="291.6" y="146" width="2.3" height="2" fill="#ecffec" stroke="#3cc43c" stroke-width="0.5" />
<line x1="295.88" y1="146" x2="295.88" y2="148.5" stroke="#12a012" stroke-width="0.7" />
<rect x="294.73" y="146.5" width="2.3" height="1.5" fill="#ecffec" stroke="#3cc43c" stroke-width="0.5" />
<line x1="299.0" y1="144.5" x2="299.0" y2="147.5" stroke="#12a012" stroke-width="0.7" />
<rect x="297.85" y="145" width="2.3" height="2" fill="#0c560c" stroke="#1da01d" stroke-width="0.5" />
<line x1="302.12" y1="144" x2="302.12" y2="146.5" stroke="#12a012" stroke-width="0.7" />
<rect x="300.98" y="144.5" width="2.3" height="1.5" fill="#0c560c" stroke="#1da01d" stroke-width="0.5" />
<line x1="305.25" y1="144" x2="305.25" y2="146.5" stroke="#12a012" stroke-width="0.7" />
<rect x="304.1" y="144.5" width="2.3" height="1.5" fill="#0c560c" stroke="#1da01d" stroke-width="0.5" />
<line x1="308.38" y1="143.5" x2="308.38" y2="147" stroke="#12a012" stroke-width="0.7" />
<rect x="307.23" y="144.7" width="2.3" height="0.7" fill="#0c560c" stroke="#1da01d" stroke-width="0.5" />
<line x1="311.5" y1="143.5" x2="311.5" y2="148" stroke="#12a012" stroke-width="0.7" />
<rect x="310.35" y="144.7" width="2.3" height="0.7" fill="#ecffec" stroke="#3cc43c" stroke-width="0.5" />
<line x1="314.62" y1="142" x2="314.62" y2="147" stroke="#12a012" stroke-width="0.7" />
<rect x="313.48" y="143" width="2.3" height="3" fill="#0c560c" stroke="#1da01d" stroke-width="0.5" />
<line x1="317.75" y1="143.5" x2="317.75" y2="146.5" stroke="#12a012" stroke-width="0.7" />
<rect x="316.6" y="144.7" width="2.3" height="0.7" fill="#0c560c" stroke="#1da01d" stroke-width="0.5" />
<line x1="320.88" y1="143.5" x2="320.88" y2="147.5" stroke="#12a012" stroke-width="0.7" />
<rect x="319.73" y="144" width="2.3" height="3" fill="#ecffec" stroke="#3cc43c" stroke-width="0.5" />
<line x1="324.0" y1="144" x2="324.0" y2="147.5" stroke="#12a012" stroke-width="0.7" />
<rect x="322.85" y="144.5" width="2.3" height="2.5" fill="#0c560c" stroke="#1da01d" stroke-width="0.5" />
<line x1="327.12" y1="141" x2="327.12" y2="145" stroke="#12a012" stroke-width="0.7" />
<rect x="325.98" y="141.5" width="2.3" height="3.0" fill="#0c560c" stroke="#1da01d" stroke-width="0.5" />
<line x1="330.25" y1="138" x2="330.25" y2="142.5" stroke="#12a012" stroke-width="0.7" />
<rect x="329.1" y="138.5" width="2.3" height="3.5" fill="#0c560c" stroke="#1da01d" stroke-width="0.5" />
<line x1="333.38" y1="135.5" x2="333.38" y2="140" stroke="#12a012" stroke-width="0.7" />
<rect x="332.23" y="136" width="2.3" height="3.5" fill="#0c560c" stroke="#1da01d" stroke-width="0.5" />
<line x1="336.5" y1="129.5" x2="336.5" y2="138" stroke="#12a012" stroke-width="0.7" />
<rect x="335.35" y="130" width="2.3" height="6.5" fill="#0c560c" stroke="#1da01d" stroke-width="0.5" />
<line x1="339.62" y1="126.5" x2="339.62" y2="134" stroke="#12a012" stroke-width="0.7" />
<rect x="338.48" y="127" width="2.3" height="4" fill="#0c560c" stroke="#1da01d" stroke-width="0.5" />
<line x1="342.75" y1="126.5" x2="342.75" y2="131" stroke="#12a012" stroke-width="0.7" />
<rect x="341.6" y="127" width="2.3" height="3.5" fill="#ecffec" stroke="#3cc43c" stroke-width="0.5" />
<line x1="345.88" y1="129.5" x2="345.88" y2="133" stroke="#12a012" stroke-width="0.7" />
<rect x="344.73" y="130" width="2.3" height="2.5" fill="#ecffec" stroke="#3cc43c" stroke-width="0.5" />
<line x1="349.0" y1="130.5" x2="349.0" y2="133" stroke="#12a012" stroke-width="0.7" />
<rect x="347.85" y="131" width="2.3" height="1.5" fill="#ecffec" stroke="#3cc43c" stroke-width="0.5" />
<line x1="352.12" y1="129.5" x2="352.12" y2="132.5" stroke="#12a012" stroke-width="0.7" />
<rect x="350.98" y="130" width="2.3" height="2" fill="#0c560c" stroke="#1da01d" stroke-width="0.5" />
<line x1="355.25" y1="129.5" x2="355.25" y2="132.5" stroke="#12a012" stroke-width="0.7" />
<rect x="354.1" y="130" width="2.3" height="2" fill="#0c560c" stroke="#1da01d" stroke-width="0.5" />
<line x1="358.38" y1="123.5" x2="358.38" y2="132" stroke="#12a012" stroke-width="0.7" />
<rect x="357.23" y="125" width="2.3" height="6.5" fill="#0c560c" stroke="#1da01d" stroke-width="0.5" />
<line x1="361.5" y1="124.5" x2="361.5" y2="130.5" stroke="#12a012" stroke-width="0.7" />
<rect x="360.35" y="125" width="2.3" height="5" fill="#ecffec" stroke="#3cc43c" stroke-width="0.5" />
<line x1="364.62" y1="128" x2="364.62" y2="133.5" stroke="#12a012" stroke-width="0.7" />
<rect x="363.48" y="130" width="2.3" height="3" fill="#ecffec" stroke="#3cc43c" stroke-width="0.5" />
<line x1="367.75" y1="132" x2="367.75" y2="136" stroke="#12a012" stroke-width="0.7" />
<rect x="366.6" y="132.5" width="2.3" height="3.0" fill="#ecffec" stroke="#3cc43c" stroke-width="0.5" />
<line x1="370.88" y1="132" x2="370.88" y2="136.5" stroke="#12a012" stroke-width="0.7" />
<rect x="369.73" y="132.5" width="2.3" height="3.5" fill="#0c560c" stroke="#1da01d" stroke-width="0.5" />
<line x1="374.0" y1="132" x2="374.0" y2="137.5" stroke="#12a012" stroke-width="0.7" />
<rect x="372.85" y="132.5" width="2.3" height="3.5" fill="#ecffec" stroke="#3cc43c" stroke-width="0.5" />
<line x1="377.12" y1="130.5" x2="377.12" y2="135.5" stroke="#12a012" stroke-width="0.7" />
<rect x="375.98" y="131" width="2.3" height="4" fill="#0c560c" stroke="#1da01d" stroke-width="0.5" />
<line x1="380.25" y1="129.5" x2="380.25" y2="133" stroke="#12a012" stroke-width="0.7" />
<rect x="379.1" y="130" width="2.3" height="2.5" fill="#0c560c" stroke="#1da01d" stroke-width="0.5" />
<line x1="383.38" y1="128" x2="383.38" y2="132.5" stroke="#12a012" stroke-width="0.7" />
<rect x="382.23" y="129.5" width="2.3" height="2.5" fill="#0c560c" stroke="#1da01d" stroke-width="0.5" />
<line x1="386.5" y1="129.5" x2="386.5" y2="133.5" stroke="#12a012" stroke-width="0.7" />
<rect x="385.35" y="130" width="2.3" height="3" fill="#ecffec" stroke="#3cc43c" stroke-width="0.5" />
<line x1="389.62" y1="132" x2="389.62" y2="134.5" stroke="#12a012" stroke-width="0.7" />
<rect x="388.48" y="132.5" width="2.3" height="1.5" fill="#ecffec" stroke="#3cc43c" stroke-width="0.5" />
<line x1="392.75" y1="132.5" x2="392.75" y2="135" stroke="#12a012" stroke-width="0.7" />
<rect x="391.6" y="133" width="2.3" height="1.5" fill="#0c560c" stroke="#1da01d" stroke-width="0.5" />
<line x1="395.88" y1="130.5" x2="395.88" y2="134" stroke="#12a012" stroke-width="0.7" />
<rect x="394.73" y="131" width="2.3" height="2.5" fill="#0c560c" stroke="#1da01d" stroke-width="0.5" />
<line x1="399.0" y1="128" x2="399.0" y2="133.5" stroke="#12a012" stroke-width="0.7" />
<rect x="397.85" y="128.5" width="2.3" height="4.5" fill="#0c560c" stroke="#1da01d" stroke-width="0.5" />
<line x1="402.12" y1="125" x2="402.12" y2="130" stroke="#12a012" stroke-width="0.7" />
<rect x="400.98" y="127.5" width="2.3" height="2.0" fill="#0c560c" stroke="#1da01d" stroke-width="0.5" />
<line x1="405.25" y1="128" x2="405.25" y2="130.5" stroke="#12a012" stroke-width="0.7" />
<rect x="404.1" y="128.5" width="2.3" height="1.5" fill="#ecffec" stroke="#3cc43c" stroke-width="0.5" />
<line x1="408.38" y1="128.5" x2="408.38" y2="131.5" stroke="#12a012" stroke-width="0.7" />
<rect x="407.23" y="129" width="2.3" height="2" fill="#ecffec" stroke="#3cc43c" stroke-width="0.5" />
<line x1="411.5" y1="124.5" x2="411.5" y2="131" stroke="#12a012" stroke-width="0.7" />
<rect x="410.35" y="127.5" width="2.3" height="3.0" fill="#0c560c" stroke="#1da01d" stroke-width="0.5" />
<line x1="414.62" y1="127.5" x2="414.62" y2="132.5" stroke="#12a012" stroke-width="0.7" />
<rect x="413.48" y="128" width="2.3" height="4" fill="#ecffec" stroke="#3cc43c" stroke-width="0.5" />
<line x1="417.75" y1="124.5" x2="417.75" y2="131.5" stroke="#12a012" stroke-width="0.7" />
<rect x="416.6" y="125" width="2.3" height="6" fill="#0c560c" stroke="#1da01d" stroke-width="0.5" />
<line x1="420.88" y1="125" x2="420.88" y2="131" stroke="#12a012" stroke-width="0.7" />
<rect x="419.73" y="125.5" width="2.3" height="3.5" fill="#ecffec" stroke="#3cc43c" stroke-width="0.5" />
<line x1="424.0" y1="127.5" x2="424.0" y2="130.5" stroke="#12a012" stroke-width="0.7" />
<rect x="422.85" y="128" width="2.3" height="2" fill="#ecffec" stroke="#3cc43c" stroke-width="0.5" />
<line x1="427.12" y1="124.5" x2="427.12" y2="133.5" stroke="#12a012" stroke-width="0.7" />
<rect x="425.98" y="125" width="2.3" height="5" fill="#0c560c" stroke="#1da01d" stroke-width="0.5" />
<line x1="430.25" y1="122" x2="430.25" y2="127" stroke="#12a012" stroke-width="0.7" />
<rect x="429.1" y="122.5" width="2.3" height="4.0" fill="#0c560c" stroke="#1da01d" stroke-width="0.5" />
<line x1="433.38" y1="120" x2="433.38" y2="124.5" stroke="#12a012" stroke-width="0.7" />
<rect x="432.23" y="122.5" width="2.3" height="1.5" fill="#0c560c" stroke="#1da01d" stroke-width="0.5" />
<line x1="436.5" y1="112" x2="436.5" y2="126" stroke="#12a012" stroke-width="0.7" />
<rect x="435.35" y="123.2" width="2.3" height="0.7" fill="#0c560c" stroke="#1da01d" stroke-width="0.5" />
<line x1="439.62" y1="117" x2="439.62" y2="128" stroke="#12a012" stroke-width="0.7" />
<rect x="438.48" y="124" width="2.3" height="1.5" fill="#ecffec" stroke="#3cc43c" stroke-width="0.5" />
<line x1="442.75" y1="123" x2="442.75" y2="126.5" stroke="#12a012" stroke-width="0.7" />
<rect x="441.6" y="123.5" width="2.3" height="2.5" fill="#0c560c" stroke="#1da01d" stroke-width="0.5" />
<line x1="445.88" y1="119" x2="445.88" y2="125.5" stroke="#12a012" stroke-width="0.7" />
<rect x="444.73" y="119.5" width="2.3" height="5.5" fill="#0c560c" stroke="#1da01d" stroke-width="0.5" />
<line x1="449.0" y1="114.5" x2="449.0" y2="126.5" stroke="#12a012" stroke-width="0.7" />
<rect x="447.85" y="119.5" width="2.3" height="6.5" fill="#ecffec" stroke="#3cc43c" stroke-width="0.5" />
<line x1="452.12" y1="122.5" x2="452.12" y2="131.5" stroke="#12a012" stroke-width="0.7" />
<rect x="450.98" y="123" width="2.3" height="8" fill="#0c560c" stroke="#1da01d" stroke-width="0.5" />
<line x1="455.25" y1="120.5" x2="455.25" y2="127" stroke="#12a012" stroke-width="0.7" />
<rect x="454.1" y="121" width="2.3" height="5.5" fill="#0c560c" stroke="#1da01d" stroke-width="0.5" />
<line x1="458.38" y1="118" x2="458.38" y2="126" stroke="#12a012" stroke-width="0.7" />
<rect x="457.23" y="120.5" width="2.3" height="2.5" fill="#ecffec" stroke="#3cc43c" stroke-width="0.5" />
<line x1="461.5" y1="121.5" x2="461.5" y2="132" stroke="#12a012" stroke-width="0.7" />
<rect x="460.35" y="122" width="2.3" height="6" fill="#ecffec" stroke="#3cc43c" stroke-width="0.5" />
<line x1="464.62" y1="126" x2="464.62" y2="132" stroke="#12a012" stroke-width="0.7" />
<rect x="463.48" y="127.5" width="2.3" height="2.0" fill="#ecffec" stroke="#3cc43c" stroke-width="0.5" />
<line x1="467.75" y1="128.5" x2="467.75" y2="131.5" stroke="#12a012" stroke-width="0.7" />
<rect x="466.6" y="129" width="2.3" height="2" fill="#ecffec" stroke="#3cc43c" stroke-width="0.5" />
<line x1="470.88" y1="129.5" x2="470.88" y2="139.5" stroke="#12a012" stroke-width="0.7" />
<rect x="469.73" y="130" width="2.3" height="7.5" fill="#ecffec" stroke="#3cc43c" stroke-width="0.5" />
<line x1="474.0" y1="133.5" x2="474.0" y2="140.5" stroke="#12a012" stroke-width="0.7" />
<rect x="472.85" y="134" width="2.3" height="6" fill="#0c560c" stroke="#1da01d" stroke-width="0.5" />
<line x1="477.12" y1="132" x2="477.12" y2="137" stroke="#12a012" stroke-width="0.7" />
<rect x="475.98" y="134" width="2.3" height="2.5" fill="#ecffec" stroke="#3cc43c" stroke-width="0.5" />
<line x1="480.25" y1="135.5" x2="480.25" y2="140" stroke="#12a012" stroke-width="0.7" />
<rect x="479.1" y="136" width="2.3" height="3.5" fill="#ecffec" stroke="#3cc43c" stroke-width="0.5" />
<line x1="483.38" y1="137" x2="483.38" y2="146.5" stroke="#12a012" stroke-width="0.7" />
<rect x="482.23" y="137.5" width="2.3" height="2.0" fill="#0c560c" stroke="#1da01d" stroke-width="0.5" />
<line x1="486.5" y1="131" x2="486.5" y2="138" stroke="#12a012" stroke-width="0.7" />
<rect x="485.35" y="131.5" width="2.3" height="6.0" fill="#0c560c" stroke="#1da01d" stroke-width="0.5" />
<line x1="489.62" y1="131.5" x2="489.62" y2="138" stroke="#12a012" stroke-width="0.7" />
<rect x="488.48" y="132" width="2.3" height="2" fill="#ecffec" stroke="#3cc43c" stroke-width="0.5" />
<line x1="492.75" y1="133" x2="492.75" y2="139.5" stroke="#12a012" stroke-width="0.7" />
<rect x="491.6" y="133.5" width="2.3" height="4.0" fill="#ecffec" stroke="#3cc43c" stroke-width="0.5" />
<line x1="495.88" y1="136" x2="495.88" y2="139.5" stroke="#12a012" stroke-width="0.7" />
<rect x="494.73" y="136.5" width="2.3" height="2.5" fill="#0c560c" stroke="#1da01d" stroke-width="0.5" />
<line x1="499.0" y1="129" x2="499.0" y2="140" stroke="#12a012" stroke-width="0.7" />
<rect x="497.85" y="134" width="2.3" height="5.5" fill="#0c560c" stroke="#1da01d" stroke-width="0.5" />
<line x1="502.12" y1="130.5" x2="502.12" y2="138.5" stroke="#12a012" stroke-width="0.7" />
<rect x="500.98" y="131" width="2.3" height="7" fill="#0c560c" stroke="#1da01d" stroke-width="0.5" />
<line x1="505.25" y1="133" x2="505.25" y2="136.5" stroke="#12a012" stroke-width="0.7" />
<rect x="504.1" y="133.5" width="2.3" height="2.5" fill="#ecffec" stroke="#3cc43c" stroke-width="0.5" />
<line x1="508.38" y1="125.5" x2="508.38" y2="137.5" stroke="#12a012" stroke-width="0.7" />
<rect x="507.23" y="126" width="2.3" height="10" fill="#0c560c" stroke="#1da01d" stroke-width="0.5" />
<line x1="511.5" y1="124.5" x2="511.5" y2="130.5" stroke="#12a012" stroke-width="0.7" />
<rect x="510.35" y="125" width="2.3" height="2" fill="#ecffec" stroke="#3cc43c" stroke-width="0.5" />
<line x1="514.62" y1="115" x2="514.62" y2="127" stroke="#12a012" stroke-width="0.7" />
<rect x="513.48" y="120" width="2.3" height="6.5" fill="#0c560c" stroke="#1da01d" stroke-width="0.5" />
<line x1="517.75" y1="117" x2="517.75" y2="122.5" stroke="#12a012" stroke-width="0.7" />
<rect x="516.6" y="119.5" width="2.3" height="2.5" fill="#ecffec" stroke="#3cc43c" stroke-width="0.5" />
<line x1="520.88" y1="84" x2="520.88" y2="123" stroke="#12a012" stroke-width="0.7" />
<rect x="519.73" y="85" width="2.3" height="37" fill="#0c560c" stroke="#1da01d" stroke-width="0.5" />
<line x1="524.0" y1="72" x2="524.0" y2="88" stroke="#12a012" stroke-width="0.7" />
<rect x="522.85" y="73.5" width="2.3" height="11.5" fill="#0c560c" stroke="#1da01d" stroke-width="0.5" />
<line x1="527.12" y1="59.5" x2="527.12" y2="75" stroke="#12a012" stroke-width="0.7" />
<rect x="525.98" y="61" width="2.3" height="12.5" fill="#0c560c" stroke="#1da01d" stroke-width="0.5" />
<line x1="530.25" y1="59.5" x2="530.25" y2="70" stroke="#12a012" stroke-width="0.7" />
<rect x="529.1" y="61" width="2.3" height="7.5" fill="#ecffec" stroke="#3cc43c" stroke-width="0.5" />
<line x1="533.38" y1="67" x2="533.38" y2="77" stroke="#12a012" stroke-width="0.7" />
<rect x="532.23" y="68.5" width="2.3" height="7.5" fill="#ecffec" stroke="#3cc43c" stroke-width="0.5" />
<line x1="536.5" y1="75" x2="536.5" y2="86.5" stroke="#12a012" stroke-width="0.7" />
<rect x="535.35" y="76" width="2.3" height="9" fill="#ecffec" stroke="#3cc43c" stroke-width="0.5" />
<line x1="539.62" y1="75" x2="539.62" y2="86" stroke="#12a012" stroke-width="0.7" />
<rect x="538.48" y="77" width="2.3" height="8" fill="#0c560c" stroke="#1da01d" stroke-width="0.5" />
<line x1="542.75" y1="72" x2="542.75" y2="80" stroke="#12a012" stroke-width="0.7" />
<rect x="541.6" y="75" width="2.3" height="2" fill="#0c560c" stroke="#1da01d" stroke-width="0.5" />
<line x1="545.88" y1="61" x2="545.88" y2="76" stroke="#12a012" stroke-width="0.7" />
<rect x="544.73" y="62" width="2.3" height="13" fill="#0c560c" stroke="#1da01d" stroke-width="0.5" />
<line x1="549.0" y1="61" x2="549.0" y2="74.5" stroke="#12a012" stroke-width="0.7" />
<rect x="547.85" y="62" width="2.3" height="11.5" fill="#ecffec" stroke="#3cc43c" stroke-width="0.5" />
<line x1="552.12" y1="70" x2="552.12" y2="76" stroke="#12a012" stroke-width="0.7" />
<rect x="550.98" y="72" width="2.3" height="1.5" fill="#0c560c" stroke="#1da01d" stroke-width="0.5" />
<line x1="555.25" y1="66" x2="555.25" y2="74" stroke="#12a012" stroke-width="0.7" />
<rect x="554.1" y="67" width="2.3" height="4" fill="#0c560c" stroke="#1da01d" stroke-width="0.5" />
<line x1="558.38" y1="66" x2="558.38" y2="71" stroke="#12a012" stroke-width="0.7" />
<rect x="557.23" y="67.5" width="2.3" height="0.7" fill="#0c560c" stroke="#1da01d" stroke-width="0.5" />
<line x1="561.5" y1="64" x2="561.5" y2="69" stroke="#12a012" stroke-width="0.7" />
<rect x="560.35" y="66.5" width="2.3" height="0.7" fill="#0c560c" stroke="#1da01d" stroke-width="0.5" />
<line x1="564.62" y1="63" x2="564.62" y2="69" stroke="#12a012" stroke-width="0.7" />
<rect x="563.48" y="66" width="2.3" height="0.7" fill="#0c560c" stroke="#1da01d" stroke-width="0.5" />
<line x1="567.75" y1="64" x2="567.75" y2="69" stroke="#12a012" stroke-width="0.7" />
<rect x="566.6" y="66" width="2.3" height="0.7" fill="#ecffec" stroke="#3cc43c" stroke-width="0.5" />
<line x1="570.88" y1="63" x2="570.88" y2="68" stroke="#12a012" stroke-width="0.7" />
<rect x="569.73" y="65.5" width="2.3" height="0.7" fill="#0c560c" stroke="#1da01d" stroke-width="0.5" />
<line x1="574.0" y1="60" x2="574.0" y2="67" stroke="#12a012" stroke-width="0.7" />
<rect x="572.85" y="62" width="2.3" height="3" fill="#0c560c" stroke="#1da01d" stroke-width="0.5" />
<line x1="577.12" y1="45" x2="577.12" y2="69" stroke="#12a012" stroke-width="0.7" />
<rect x="575.98" y="53.5" width="2.3" height="15.0" fill="#0c560c" stroke="#1da01d" stroke-width="0.5" />
<line x1="580.25" y1="53" x2="580.25" y2="68" stroke="#12a012" stroke-width="0.7" />
<rect x="579.1" y="54" width="2.3" height="6" fill="#0c560c" stroke="#1da01d" stroke-width="0.5" />
<line x1="583.38" y1="52.5" x2="583.38" y2="62" stroke="#12a012" stroke-width="0.7" />
<rect x="582.23" y="53.5" width="2.3" height="7.5" fill="#ecffec" stroke="#3cc43c" stroke-width="0.5" />
<line x1="586.5" y1="55" x2="586.5" y2="65" stroke="#12a012" stroke-width="0.7" />
<rect x="585.35" y="57" width="2.3" height="4" fill="#0c560c" stroke="#1da01d" stroke-width="0.5" />
<line x1="589.62" y1="52" x2="589.62" y2="58" stroke="#12a012" stroke-width="0.7" />
<rect x="588.48" y="54" width="2.3" height="3" fill="#0c560c" stroke="#1da01d" stroke-width="0.5" />
<line x1="592.75" y1="52" x2="592.75" y2="57" stroke="#12a012" stroke-width="0.7" />
<rect x="591.6" y="54" width="2.3" height="0.7" fill="#ecffec" stroke="#3cc43c" stroke-width="0.5" />
<line x1="595.88" y1="50" x2="595.88" y2="56" stroke="#12a012" stroke-width="0.7" />
<rect x="594.73" y="51" width="2.3" height="4" fill="#0c560c" stroke="#1da01d" stroke-width="0.5" />
<line x1="599.0" y1="47" x2="599.0" y2="52" stroke="#12a012" stroke-width="0.7" />
<rect x="597.85" y="48" width="2.3" height="3" fill="#0c560c" stroke="#1da01d" stroke-width="0.5" />
<line x1="602.12" y1="46" x2="602.12" y2="50" stroke="#12a012" stroke-width="0.7" />
<rect x="600.98" y="47" width="2.3" height="2" fill="#ecffec" stroke="#3cc43c" stroke-width="0.5" />
<line x1="605.25" y1="48" x2="605.25" y2="54.5" stroke="#12a012" stroke-width="0.7" />
<rect x="604.1" y="49" width="2.3" height="4.5" fill="#ecffec" stroke="#3cc43c" stroke-width="0.5" />
<line x1="608.38" y1="53" x2="608.38" y2="58" stroke="#12a012" stroke-width="0.7" />
<rect x="607.23" y="53.5" width="2.3" height="3.5" fill="#ecffec" stroke="#3cc43c" stroke-width="0.5" />
<line x1="611.5" y1="56" x2="611.5" y2="60" stroke="#12a012" stroke-width="0.7" />
<rect x="610.35" y="57" width="2.3" height="1.5" fill="#ecffec" stroke="#3cc43c" stroke-width="0.5" />
<line x1="614.62" y1="55" x2="614.62" y2="61" stroke="#12a012" stroke-width="0.7" />
<rect x="613.48" y="56" width="2.3" height="4" fill="#ecffec" stroke="#3cc43c" stroke-width="0.5" />
<line x1="617.75" y1="55" x2="617.75" y2="60" stroke="#12a012" stroke-width="0.7" />
<rect x="616.6" y="56.5" width="2.3" height="2.0" fill="#0c560c" stroke="#1da01d" stroke-width="0.5" />
<line x1="620.88" y1="55" x2="620.88" y2="58" stroke="#12a012" stroke-width="0.7" />
<rect x="619.73" y="56" width="2.3" height="0.7" fill="#0c560c" stroke="#1da01d" stroke-width="0.5" />
<line x1="624.0" y1="51" x2="624.0" y2="58" stroke="#12a012" stroke-width="0.7" />
<rect x="622.85" y="52" width="2.3" height="5" fill="#0c560c" stroke="#1da01d" stroke-width="0.5" />
<line x1="627.12" y1="49" x2="627.12" y2="53" stroke="#12a012" stroke-width="0.7" />
<rect x="625.98" y="50.5" width="2.3" height="1.5" fill="#0c560c" stroke="#1da01d" stroke-width="0.5" />
<line x1="630.25" y1="50" x2="630.25" y2="53" stroke="#12a012" stroke-width="0.7" />
<rect x="629.1" y="51" width="2.3" height="0.7" fill="#0c560c" stroke="#1da01d" stroke-width="0.5" />
<line x1="633.38" y1="50" x2="633.38" y2="53" stroke="#12a012" stroke-width="0.7" />
<rect x="632.23" y="51" width="2.3" height="0.7" fill="#0c560c" stroke="#1da01d" stroke-width="0.5" />
<line x1="636.5" y1="47" x2="636.5" y2="52" stroke="#12a012" stroke-width="0.7" />
<rect x="635.35" y="48" width="2.3" height="3" fill="#0c560c" stroke="#1da01d" stroke-width="0.5" />
<line x1="639.62" y1="44" x2="639.62" y2="49" stroke="#12a012" stroke-width="0.7" />
<rect x="638.48" y="46" width="2.3" height="2" fill="#0c560c" stroke="#1da01d" stroke-width="0.5" />
<line x1="642.75" y1="45" x2="642.75" y2="51" stroke="#12a012" stroke-width="0.7" />
<rect x="641.6" y="46" width="2.3" height="4" fill="#ecffec" stroke="#3cc43c" stroke-width="0.5" />
<line x1="645.88" y1="46" x2="645.88" y2="50" stroke="#12a012" stroke-width="0.7" />
<rect x="644.73" y="47" width="2.3" height="2" fill="#0c560c" stroke="#1da01d" stroke-width="0.5" />
<line x1="649.0" y1="48" x2="649.0" y2="48" stroke="#12a012" stroke-width="0.7" />
<rect x="647.85" y="48" width="2.3" height="0.7" fill="#0c560c" stroke="#1da01d" stroke-width="0.5" />
</g>
<path d="M200.9 120h2.2v3.6l2.2-1v1.6L202 127L198.7 124.2v-1.6l2.2 1z" fill="#f01818"/>
<text x="202.5" y="118.1" font-size="6.2" fill="#e81010" font-family="Liberation Sans, sans-serif" stroke="#e81010" stroke-width="0.2" textLength="9" lengthAdjust="spacingAndGlyphs" >-25</text>
<path d="M306.9 135h2.2v3.1l2.2-1v1.6L308 141.5L304.7 138.7v-1.6l2.2 1z" fill="#f01818"/>
<text x="310.5" y="135.5" font-size="6.2" fill="#e81010" font-family="Liberation Sans, sans-serif" stroke="#e81010" stroke-width="0.2" textLength="10.5" lengthAdjust="spacingAndGlyphs" >126</text>
<path d="M334.9 154h2.2v-3.6l2.2 1v-1.6L336 147L332.7 149.8v1.6l2.2-1z" fill="#18e018"/>
<text x="339" y="155.1" font-size="6.2" fill="#e81010" font-family="Liberation Sans, sans-serif" stroke="#e81010" stroke-width="0.2" textLength="10.5" lengthAdjust="spacingAndGlyphs" >178</text>
<path d="M351.4 122h2.2v3.6l2.2-1v1.6L352.5 129L349.2 126.2v-1.6l2.2 1z" fill="#f01818"/>
<text x="354.4" y="125.0" font-size="6.2" fill="#e81010" font-family="Liberation Sans, sans-serif" stroke="#e81010" stroke-width="0.2" >5</text>
<path d="M356.5 146.8h2.2v-3.4l2.2 1v-1.6L357.6 140L354.3 142.8v1.6l2.2-1z" fill="#18e018"/>
<text x="360.8" y="148.1" font-size="6.2" fill="#e81010" font-family="Liberation Sans, sans-serif" stroke="#e81010" stroke-width="0.2" textLength="6.8" lengthAdjust="spacingAndGlyphs" >72</text>
<path d="M363.2 120h2.2v3.6l2.2-1v1.6L364.3 127L361.0 124.2v-1.6l2.2 1z" fill="#f01818"/>
<text x="367" y="122.5" font-size="6.2" fill="#e81010" font-family="Liberation Sans, sans-serif" stroke="#e81010" stroke-width="0.2" textLength="7" lengthAdjust="spacingAndGlyphs" >98</text>
<path d="M400.9 116h2.2v4.2l2.2-1v1.6L402 123.6L398.7 120.8v-1.6l2.2 1z" fill="#f01818"/>
<text x="404.8" y="118.5" font-size="6.2" fill="#e81010" font-family="Liberation Sans, sans-serif" stroke="#e81010" stroke-width="0.2" >8</text>
<path d="M396.9 151h2.2v-3.6l2.2 1v-1.6L398 144L394.7 146.8v1.6l2.2-1z" fill="#18e018"/>
<text x="401" y="152.5" font-size="6.2" fill="#e81010" font-family="Liberation Sans, sans-serif" stroke="#e81010" stroke-width="0.2" textLength="6.8" lengthAdjust="spacingAndGlyphs" >55</text>
<path d="M435.29999999999995 102h2.2v4.6l2.2-1v1.6L436.4 110L433.09999999999997 107.2v-1.6l2.2 1z" fill="#f01818"/>
<text x="439" y="104.0" font-size="6.2" fill="#e81010" font-family="Liberation Sans, sans-serif" stroke="#e81010" stroke-width="0.2" >8</text>
<path d="M431.59999999999997 143.5h2.2v-3.7l2.2 1v-1.6L432.7 136.4L429.4 139.2v1.6l2.2-1z" fill="#18e018"/>
<text x="436" y="144.5" font-size="6.2" fill="#e81010" font-family="Liberation Sans, sans-serif" stroke="#e81010" stroke-width="0.2" textLength="6.8" lengthAdjust="spacingAndGlyphs" >73</text>
<path d="M512.9 151h2.2v-3.6l2.2 1v-1.6L514 144L510.7 146.8v1.6l2.2-1z" fill="#18e018"/>
<path d="M255.4 163L258 160L260.6 163z" fill="#18e018"/>
<path d="M126.2 163L127 161.8L127.8 163z" fill="#18e018"/>
<path d="M646.4 38.4h5.2l-2.6 2.4z" fill="#9ab4d8"/>
<path d="M108 155.7H120.39999999999999L122.6 158.89999999999998L120.39999999999999 162.1H108z" fill="#b4e4ea" stroke="#fff" stroke-width="0.5"/>
<text x="108.7" y="161.1" font-size="5.4" fill="#161616" font-family="Liberation Sans, sans-serif" stroke="#161616" stroke-width="0.26" textLength="11.4" lengthAdjust="spacingAndGlyphs" >07:30</text>
<clipPath id="c1266"><rect x="126.0" y="150" width="9.800000000000017" height="14"/></clipPath><g clip-path="url(#c1266)">
<path d="M126.6 155.7H139.0L141.2 158.89999999999998L139.0 162.1H126.6z" fill="#ffc4d0" stroke="#fff" stroke-width="0.5"/>
<text x="127.3" y="161.1" font-size="5.4" fill="#161616" font-family="Liberation Sans, sans-serif" stroke="#161616" stroke-width="0.26" textLength="11.4" lengthAdjust="spacingAndGlyphs" >09:00</text>
</g>
<path d="M136.2 155.7H148.6L150.79999999999998 158.89999999999998L148.6 162.1H136.2z" fill="#ffc4d0" stroke="#fff" stroke-width="0.5"/>
<text x="136.89999999999998" y="161.1" font-size="5.4" fill="#161616" font-family="Liberation Sans, sans-serif" stroke="#161616" stroke-width="0.26" textLength="11.4" lengthAdjust="spacingAndGlyphs" >09:45</text>
<clipPath id="c1640"><rect x="163.4" y="150" width="13.6" height="14"/></clipPath><g clip-path="url(#c1640)">
<path d="M164 155.7H176.4L178.6 158.89999999999998L176.4 162.1H164z" fill="#ffc4d0" stroke="#fff" stroke-width="0.5"/>
<text x="164.7" y="161.1" font-size="5.4" fill="#161616" font-family="Liberation Sans, sans-serif" stroke="#161616" stroke-width="0.26" textLength="11.4" lengthAdjust="spacingAndGlyphs" >12:00</text>
</g>
<path d="M177 155.7H189.4L191.6 158.89999999999998L189.4 162.1H177z" fill="#b4e4ea" stroke="#fff" stroke-width="0.5"/>
<text x="177.7" y="161.1" font-size="5.4" fill="#161616" font-family="Liberation Sans, sans-serif" stroke="#161616" stroke-width="0.26" textLength="11.4" lengthAdjust="spacingAndGlyphs" >13:00</text>
<clipPath id="c2084"><rect x="207.8" y="150" width="3.0000000000000058" height="14"/></clipPath><g clip-path="url(#c2084)">
<path d="M208.4 155.7H220.8L223.0 158.89999999999998L220.8 162.1H208.4z" fill="#ffffff" stroke="#fff" stroke-width="0.5"/>
<text x="209.1" y="161.1" font-size="5.4" fill="#161616" font-family="Liberation Sans, sans-serif" stroke="#161616" stroke-width="0.26" textLength="11.4" lengthAdjust="spacingAndGlyphs" >15:00</text>
</g>
<path d="M211 155.7H223.4L225.6 158.89999999999998L223.4 162.1H211z" fill="#b4e4ea" stroke="#fff" stroke-width="0.5"/>
<text x="211.7" y="161.1" font-size="5.4" fill="#161616" font-family="Liberation Sans, sans-serif" stroke="#161616" stroke-width="0.26" textLength="11.4" lengthAdjust="spacingAndGlyphs" >15:55</text>
<path d="M227 155.7H239.4L241.6 158.89999999999998L239.4 162.1H227z" fill="#ffc4d0" stroke="#fff" stroke-width="0.5"/>
<text x="227.7" y="161.1" font-size="5.4" fill="#161616" font-family="Liberation Sans, sans-serif" stroke="#161616" stroke-width="0.26" textLength="11.4" lengthAdjust="spacingAndGlyphs" >17:00</text>
<path d="M264.4 155.7H276.8L279.0 158.89999999999998L276.8 162.1H264.4z" fill="#b4e4ea" stroke="#fff" stroke-width="0.5"/>
<text x="265.09999999999997" y="161.1" font-size="5.4" fill="#161616" font-family="Liberation Sans, sans-serif" stroke="#161616" stroke-width="0.26" textLength="11.4" lengthAdjust="spacingAndGlyphs" >20:00</text>
<path d="M289.4 155.7H301.8L304.0 158.89999999999998L301.8 162.1H289.4z" fill="#b4e4ea" stroke="#fff" stroke-width="0.5"/>
<text x="290.09999999999997" y="161.1" font-size="5.4" fill="#161616" font-family="Liberation Sans, sans-serif" stroke="#161616" stroke-width="0.26" textLength="11.4" lengthAdjust="spacingAndGlyphs" >22:00</text>
<path d="M308 155.7H320.40000000000003L322.6 158.89999999999998L320.40000000000003 162.1H308z" fill="#ffc4d0" stroke="#fff" stroke-width="0.5"/>
<text x="308.7" y="161.1" font-size="5.4" fill="#161616" font-family="Liberation Sans, sans-serif" stroke="#161616" stroke-width="0.26" textLength="11.4" lengthAdjust="spacingAndGlyphs" >23:30</text>
<path d="M339.4 155.7H351.8L354.0 158.89999999999998L351.8 162.1H339.4z" fill="#ffffff" stroke="#fff" stroke-width="0.5"/>
<text x="340.09999999999997" y="161.1" font-size="5.4" fill="#161616" font-family="Liberation Sans, sans-serif" stroke="#161616" stroke-width="0.26" textLength="11.4" lengthAdjust="spacingAndGlyphs" >02:01</text>
<path d="M364.4 155.7H376.8L379.0 158.89999999999998L376.8 162.1H364.4z" fill="#ffffff" stroke="#fff" stroke-width="0.5"/>
<text x="365.09999999999997" y="161.1" font-size="5.4" fill="#161616" font-family="Liberation Sans, sans-serif" stroke="#161616" stroke-width="0.26" textLength="11.4" lengthAdjust="spacingAndGlyphs" >04:00</text>
<clipPath id="c4270"><rect x="426.4" y="150" width="9.6" height="14"/></clipPath><g clip-path="url(#c4270)">
<path d="M427 155.7H439.40000000000003L441.6 158.89999999999998L439.40000000000003 162.1H427z" fill="#ffffff" stroke="#fff" stroke-width="0.5"/>
<text x="427.7" y="161.1" font-size="5.4" fill="#161616" font-family="Liberation Sans, sans-serif" stroke="#161616" stroke-width="0.26" textLength="11.4" lengthAdjust="spacingAndGlyphs" >09:00</text>
</g>
<clipPath id="c4364"><rect x="435.79999999999995" y="150" width="3.200000000000023" height="14"/></clipPath><g clip-path="url(#c4364)">
<path d="M436.4 155.7H448.8L451.0 158.89999999999998L448.8 162.1H436.4z" fill="#ffffff" stroke="#fff" stroke-width="0.5"/>
<text x="437.09999999999997" y="161.1" font-size="5.4" fill="#161616" font-family="Liberation Sans, sans-serif" stroke="#161616" stroke-width="0.26" textLength="11.4" lengthAdjust="spacingAndGlyphs" >09:45</text>
</g>
<path d="M439.4 155.7H451.8L454.0 158.89999999999998L451.8 162.1H439.4z" fill="#ffffff" stroke="#fff" stroke-width="0.5"/>
<text x="440.09999999999997" y="161.1" font-size="5.4" fill="#161616" font-family="Liberation Sans, sans-serif" stroke="#161616" stroke-width="0.26" textLength="11.4" lengthAdjust="spacingAndGlyphs" >10:00</text>
<clipPath id="c4644"><rect x="463.79999999999995" y="150" width="13.200000000000022" height="14"/></clipPath><g clip-path="url(#c4644)">
<path d="M464.4 155.7H476.8L479.0 158.89999999999998L476.8 162.1H464.4z" fill="#ffffff" stroke="#fff" stroke-width="0.5"/>
<text x="465.09999999999997" y="161.1" font-size="5.4" fill="#161616" font-family="Liberation Sans, sans-serif" stroke="#161616" stroke-width="0.26" textLength="11.4" lengthAdjust="spacingAndGlyphs" >12:00</text>
</g>
<clipPath id="c4772"><rect x="476.59999999999997" y="150" width="13.000000000000034" height="14"/></clipPath><g clip-path="url(#c4772)">
<path d="M477.2 155.7H489.6L491.8 158.89999999999998L489.6 162.1H477.2z" fill="#ffffff" stroke="#fff" stroke-width="0.5"/>
<text x="477.9" y="161.1" font-size="5.4" fill="#161616" font-family="Liberation Sans, sans-serif" stroke="#161616" stroke-width="0.26" textLength="11.4" lengthAdjust="spacingAndGlyphs" >13:00</text>
</g>
<path d="M489.6 155.7H502.00000000000006L504.20000000000005 158.89999999999998L502.00000000000006 162.1H489.6z" fill="#ffffff" stroke="#fff" stroke-width="0.5"/>
<text x="490.3" y="161.1" font-size="5.4" fill="#161616" font-family="Liberation Sans, sans-serif" stroke="#161616" stroke-width="0.26" textLength="11.4" lengthAdjust="spacingAndGlyphs" >14:00</text>
<clipPath id="c5056"><rect x="505.0" y="150" width="8.999999999999977" height="14"/></clipPath><g clip-path="url(#c5056)">
<path d="M505.6 155.7H518.0L520.2 158.89999999999998L518.0 162.1H505.6z" fill="#ffffff" stroke="#fff" stroke-width="0.5"/>
<text x="506.3" y="161.1" font-size="5.4" fill="#161616" font-family="Liberation Sans, sans-serif" stroke="#161616" stroke-width="0.26" textLength="11.4" lengthAdjust="spacingAndGlyphs" >15:25</text>
</g>
<path d="M514.4 155.7H526.8L529.0 158.89999999999998L526.8 162.1H514.4z" fill="#ffffff" stroke="#fff" stroke-width="0.5"/>
<text x="515.1" y="161.1" font-size="5.4" fill="#161616" font-family="Liberation Sans, sans-serif" stroke="#161616" stroke-width="0.26" textLength="11.4" lengthAdjust="spacingAndGlyphs" >16:00</text>
<path d="M533.4 155.7H545.8L548.0 158.89999999999998L545.8 162.1H533.4z" fill="#ffffff" stroke="#fff" stroke-width="0.5"/>
<text x="534.1" y="161.1" font-size="5.4" fill="#161616" font-family="Liberation Sans, sans-serif" stroke="#161616" stroke-width="0.26" textLength="11.4" lengthAdjust="spacingAndGlyphs" >17:30</text>
<clipPath id="c5644"><rect x="563.8" y="150" width="13.200000000000022" height="14"/></clipPath><g clip-path="url(#c5644)">
<path d="M564.4 155.7H576.8L579.0 158.89999999999998L576.8 162.1H564.4z" fill="#a4ecec" stroke="#fff" stroke-width="0.5"/>
<text x="565.1" y="161.1" font-size="5.4" fill="#161616" font-family="Liberation Sans, sans-serif" stroke="#161616" stroke-width="0.26" textLength="11.4" lengthAdjust="spacingAndGlyphs" >20:00</text>
</g>
<path d="M577 155.7H589.4L591.6 158.89999999999998L589.4 162.1H577z" fill="#ffffff" stroke="#fff" stroke-width="0.5"/>
<text x="577.7" y="161.1" font-size="5.4" fill="#161616" font-family="Liberation Sans, sans-serif" stroke="#161616" stroke-width="0.26" textLength="11.4" lengthAdjust="spacingAndGlyphs" >21:00</text>
<path d="M639.4 155.7H651.8L654.0 158.89999999999998L651.8 162.1H639.4z" fill="#ffffff" stroke="#fff" stroke-width="0.5"/>
<text x="640.1" y="161.1" font-size="5.4" fill="#161616" font-family="Liberation Sans, sans-serif" stroke="#161616" stroke-width="0.26" textLength="11.4" lengthAdjust="spacingAndGlyphs" >02:01</text>
<text x="514.8" y="155.3" font-size="6.2" fill="#e81010" font-family="Liberation Sans, sans-serif" stroke="#e81010" stroke-width="0.2" textLength="9" lengthAdjust="spacingAndGlyphs" >-40</text>
<line x1="722.6" y1="60.6" x2="724" y2="60.6" stroke="#9a9a9a" stroke-width="0.6" />
<text x="724.4" y="62.5" font-size="5.4" fill="#c8c8c8" font-family="Liberation Sans, sans-serif" stroke="#c8c8c8" stroke-width="0.06" textLength="18.6" lengthAdjust="spacingAndGlyphs" >1.15390</text>
<line x1="722.6" y1="73.47" x2="724" y2="73.47" stroke="#9a9a9a" stroke-width="0.6" />
<text x="724.4" y="75.37" font-size="5.4" fill="#c8c8c8" font-family="Liberation Sans, sans-serif" stroke="#c8c8c8" stroke-width="0.06" textLength="18.6" lengthAdjust="spacingAndGlyphs" >1.15240</text>
<line x1="722.6" y1="86.34" x2="724" y2="86.34" stroke="#9a9a9a" stroke-width="0.6" />
<text x="724.4" y="88.24000000000001" font-size="5.4" fill="#c8c8c8" font-family="Liberation Sans, sans-serif" stroke="#c8c8c8" stroke-width="0.06" textLength="18.6" lengthAdjust="spacingAndGlyphs" >1.15090</text>
<line x1="722.6" y1="99.21000000000001" x2="724" y2="99.21000000000001" stroke="#9a9a9a" stroke-width="0.6" />
<text x="724.4" y="101.11000000000001" font-size="5.4" fill="#c8c8c8" font-family="Liberation Sans, sans-serif" stroke="#c8c8c8" stroke-width="0.06" textLength="18.6" lengthAdjust="spacingAndGlyphs" >1.14940</text>
<line x1="722.6" y1="112.08" x2="724" y2="112.08" stroke="#9a9a9a" stroke-width="0.6" />
<text x="724.4" y="113.98" font-size="5.4" fill="#c8c8c8" font-family="Liberation Sans, sans-serif" stroke="#c8c8c8" stroke-width="0.06" textLength="18.6" lengthAdjust="spacingAndGlyphs" >1.14790</text>
<line x1="722.6" y1="124.94999999999999" x2="724" y2="124.94999999999999" stroke="#9a9a9a" stroke-width="0.6" />
<text x="724.4" y="126.85" font-size="5.4" fill="#c8c8c8" font-family="Liberation Sans, sans-serif" stroke="#c8c8c8" stroke-width="0.06" textLength="18.6" lengthAdjust="spacingAndGlyphs" >1.14640</text>
<line x1="722.6" y1="137.82" x2="724" y2="137.82" stroke="#9a9a9a" stroke-width="0.6" />
<text x="724.4" y="139.72" font-size="5.4" fill="#c8c8c8" font-family="Liberation Sans, sans-serif" stroke="#c8c8c8" stroke-width="0.06" textLength="18.6" lengthAdjust="spacingAndGlyphs" >1.14490</text>
<line x1="722.6" y1="150.69" x2="724" y2="150.69" stroke="#9a9a9a" stroke-width="0.6" />
<text x="724.4" y="152.59" font-size="5.4" fill="#c8c8c8" font-family="Liberation Sans, sans-serif" stroke="#c8c8c8" stroke-width="0.06" textLength="18.6" lengthAdjust="spacingAndGlyphs" >1.14340</text>
<rect x="723.6" y="45.8" width="21" height="5.8" fill="#b8c8dc" />
<text x="724.4" y="50.7" font-size="5.4" fill="#10182a" font-family="Liberation Sans, sans-serif" stroke="#10182a" stroke-width="0.06" textLength="18.6" lengthAdjust="spacingAndGlyphs" >1.15528</text>
<text x="673" y="45.5" font-size="5.2" fill="#f4f4f4" font-family="Liberation Sans, sans-serif" stroke="#f4f4f4" stroke-width="0.2" textLength="39.6" lengthAdjust="spacingAndGlyphs" >FA_Test_v1_6__1</text>
<path d="M716 39.3h3.6" stroke="#e4e4e4" stroke-width="0.6"/><path d="M714.6 42.4 q3.2 -3.6 6.6 0z" fill="#b8b8b8"/><circle cx="716.4" cy="44.2" r="2" fill="#4aa0e8"/><circle cx="719.4" cy="44.2" r="2.3" fill="#e84030" stroke="#fff" stroke-width="0.4"/><rect x="718.5" y="43.3" width="1.8" height="1.8" fill="#fff"/>
<text x="3.6" y="169.9" font-size="5.3" fill="#f4f4f4" font-family="Liberation Sans, sans-serif" stroke="#f4f4f4" stroke-width="0.2" textLength="50" lengthAdjust="spacingAndGlyphs" >FourAverage -1.721370</text>
<line x1="2.5" y1="184.6" x2="722.6" y2="184.6" stroke="#555" stroke-width="0.6" stroke-dasharray="0.8 1.2"/>
<g id="hist">
<rect x="4.3" y="184.6" width="1.9" height="1.54" fill="#f01414" />
<rect x="7.42" y="184.6" width="1.9" height="2.12" fill="#f01414" />
<rect x="10.55" y="184.6" width="1.9" height="3.33" fill="#f01414" />
<rect x="13.68" y="184.6" width="1.9" height="5.42" fill="#f01414" />
<rect x="16.8" y="184.6" width="1.9" height="7.25" fill="#f01414" />
<rect x="19.93" y="184.6" width="1.9" height="8.0" fill="#f01414" />
<rect x="23.05" y="184.6" width="1.9" height="7.33" fill="#f01414" />
<rect x="26.18" y="184.6" width="1.9" height="5.25" fill="#f01414" />
<rect x="29.3" y="184.6" width="1.9" height="3.58" fill="#f01414" />
<rect x="32.42" y="184.6" width="1.9" height="2.54" fill="#f01414" />
<rect x="35.55" y="184.6" width="1.9" height="1.5" fill="#f01414" />
<rect x="38.67" y="184.6" width="1.9" height="1.54" fill="#f01414" />
<rect x="41.8" y="184.6" width="1.9" height="3.75" fill="#f01414" />
<rect x="44.92" y="184.6" width="1.9" height="8.12" fill="#f01414" />
<rect x="48.05" y="184.6" width="1.9" height="14.67" fill="#f01414" />
<rect x="51.17" y="184.6" width="1.9" height="19.55" fill="#f01414" />
<rect x="54.3" y="184.6" width="1.9" height="17.58" fill="#f01414" />
<rect x="57.42" y="184.6" width="1.9" height="12.38" fill="#f01414" />
<rect x="60.55" y="184.6" width="1.9" height="7.5" fill="#f01414" />
<rect x="63.67" y="184.6" width="1.9" height="4.79" fill="#f01414" />
<rect x="66.8" y="184.6" width="1.9" height="3.88" fill="#f01414" />
<rect x="69.92" y="184.6" width="1.9" height="3.38" fill="#f01414" />
<rect x="73.05" y="184.6" width="1.9" height="3.4" fill="#f01414" />
<rect x="76.17" y="184.6" width="1.9" height="3.71" fill="#f01414" />
<rect x="79.3" y="184.6" width="1.9" height="4.01" fill="#f01414" />
<rect x="82.42" y="184.6" width="1.9" height="4.17" fill="#f01414" />
<rect x="85.55" y="184.6" width="1.9" height="4.33" fill="#f01414" />
<rect x="88.67" y="184.6" width="1.9" height="4.48" fill="#f01414" />
<rect x="91.8" y="184.6" width="1.9" height="4.36" fill="#f01414" />
<rect x="94.92" y="184.6" width="1.9" height="4.21" fill="#f01414" />
<rect x="98.05" y="184.6" width="1.9" height="4.05" fill="#f01414" />
<rect x="101.17" y="184.6" width="1.9" height="3.89" fill="#f01414" />
<rect x="104.3" y="184.6" width="1.9" height="3.74" fill="#f01414" />
<rect x="107.42" y="184.6" width="1.9" height="3.58" fill="#f01414" />
<rect x="110.55" y="184.6" width="1.9" height="3.2" fill="#f01414" />
<rect x="113.67" y="184.6" width="1.9" height="2.58" fill="#f01414" />
<rect x="116.8" y="184.6" width="1.9" height="1.95" fill="#f01414" />
<rect x="119.92" y="184.6" width="1.9" height="1.3" fill="#f01414" />
<rect x="123.05" y="184.6" width="1.9" height="0.6" fill="#f01414" />
<rect x="126.17" y="183.95" width="1.9" height="0.65" fill="#14f014" />
<rect x="129.3" y="182.85" width="1.9" height="1.75" fill="#14f014" />
<rect x="132.43" y="181.81" width="1.9" height="2.79" fill="#14f014" />
<rect x="135.55" y="179.93" width="1.9" height="4.67" fill="#14f014" />
<rect x="138.68" y="178.72" width="1.9" height="5.88" fill="#14f014" />
<rect x="141.8" y="177.68" width="1.9" height="6.92" fill="#14f014" />
<rect x="144.93" y="175.68" width="1.9" height="8.92" fill="#14f014" />
<rect x="148.05" y="172.6" width="1.9" height="12.0" fill="#14f014" />
<rect x="151.18" y="169.52" width="1.9" height="15.08" fill="#14f014" />
<rect x="154.3" y="167.68" width="1.9" height="16.92" fill="#14f014" />
<rect x="157.43" y="168.85" width="1.9" height="15.75" fill="#14f014" />
<rect x="160.55" y="171.43" width="1.9" height="13.17" fill="#14f014" />
<rect x="163.68" y="176.22" width="1.9" height="8.38" fill="#14f014" />
<rect x="166.8" y="179.1" width="1.9" height="5.5" fill="#14f014" />
<rect x="169.93" y="180.31" width="1.9" height="4.29" fill="#14f014" />
<rect x="173.05" y="179.43" width="1.9" height="5.17" fill="#14f014" />
<rect x="176.18" y="178.68" width="1.9" height="5.92" fill="#14f014" />
<rect x="179.3" y="177.43" width="1.9" height="7.17" fill="#14f014" />
<rect x="182.43" y="175.35" width="1.9" height="9.25" fill="#14f014" />
<rect x="185.55" y="173.53" width="1.9" height="11.07" fill="#14f014" />
<rect x="188.68" y="173.17" width="1.9" height="11.43" fill="#14f014" />
<rect x="191.8" y="175.35" width="1.9" height="9.25" fill="#14f014" />
<rect x="194.93" y="178.47" width="1.9" height="6.12" fill="#14f014" />
<rect x="198.05" y="181.6" width="1.9" height="3.0" fill="#14f014" />
<rect x="201.53" y="184.2" width="1.2" height="0.8" fill="#c01010" />
<rect x="204.3" y="184.6" width="1.9" height="2.21" fill="#f01414" />
<rect x="207.43" y="184.6" width="1.9" height="2.5" fill="#f01414" />
<rect x="210.55" y="184.6" width="1.9" height="2.25" fill="#f01414" />
<rect x="213.68" y="184.6" width="1.9" height="2.0" fill="#f01414" />
<rect x="216.8" y="184.6" width="1.9" height="1.78" fill="#f01414" />
<rect x="219.93" y="184.6" width="1.9" height="1.5" fill="#f01414" />
<rect x="223.05" y="184.6" width="1.9" height="1.5" fill="#f01414" />
<rect x="226.18" y="184.6" width="1.9" height="1.5" fill="#f01414" />
<rect x="229.3" y="184.6" width="1.9" height="1.48" fill="#f01414" />
<rect x="232.43" y="184.6" width="1.9" height="1.16" fill="#f01414" />
<rect x="235.55" y="184.6" width="1.9" height="0.88" fill="#f01414" />
<rect x="238.68" y="184.6" width="1.9" height="0.63" fill="#f01414" />
<rect x="242.15" y="184.2" width="1.2" height="0.8" fill="#c01010" />
<rect x="245.28" y="184.2" width="1.2" height="0.8" fill="#c01010" />
<rect x="248.4" y="184.2" width="1.2" height="0.8" fill="#c01010" />
<rect x="251.53" y="184.2" width="1.2" height="0.8" fill="#10c010" />
<rect x="254.65" y="184.2" width="1.2" height="0.8" fill="#10c010" />
<rect x="257.43" y="183.89" width="1.9" height="0.71" fill="#14f014" />
<rect x="260.55" y="182.93" width="1.9" height="1.67" fill="#14f014" />
<rect x="263.68" y="181.79" width="1.9" height="2.81" fill="#14f014" />
<rect x="266.8" y="180.22" width="1.9" height="4.38" fill="#14f014" />
<rect x="269.93" y="178.95" width="1.9" height="5.65" fill="#14f014" />
<rect x="273.05" y="178.6" width="1.9" height="6.0" fill="#14f014" />
<rect x="276.18" y="178.79" width="1.9" height="5.81" fill="#14f014" />
<rect x="279.3" y="179.31" width="1.9" height="5.29" fill="#14f014" />
<rect x="282.43" y="179.6" width="1.9" height="5.0" fill="#14f014" />
<rect x="285.55" y="180.1" width="1.9" height="4.5" fill="#14f014" />
<rect x="288.68" y="181.14" width="1.9" height="3.46" fill="#14f014" />
<rect x="291.8" y="181.89" width="1.9" height="2.71" fill="#14f014" />
<rect x="294.93" y="182.41" width="1.9" height="2.19" fill="#14f014" />
<rect x="298.05" y="182.6" width="1.9" height="2.0" fill="#14f014" />
<rect x="301.18" y="182.95" width="1.9" height="1.65" fill="#14f014" />
<rect x="304.3" y="183.62" width="1.9" height="0.97" fill="#14f014" />
<rect x="307.43" y="184.6" width="1.9" height="0.79" fill="#f01414" />
<rect x="310.55" y="184.6" width="1.9" height="2.67" fill="#f01414" />
<rect x="313.68" y="184.6" width="1.9" height="4.75" fill="#f01414" />
<rect x="316.8" y="184.6" width="1.9" height="5.92" fill="#f01414" />
<rect x="319.93" y="184.6" width="1.9" height="6.96" fill="#f01414" />
<rect x="323.05" y="184.6" width="1.9" height="7.5" fill="#f01414" />
<rect x="326.18" y="184.6" width="1.9" height="5.92" fill="#f01414" />
<rect x="329.3" y="184.6" width="1.9" height="3.42" fill="#f01414" />
<rect x="332.43" y="183.1" width="1.9" height="1.5" fill="#14f014" />
<rect x="335.55" y="179.18" width="1.9" height="5.42" fill="#14f014" />
<rect x="338.68" y="177.31" width="1.9" height="7.29" fill="#14f014" />
<rect x="341.8" y="178.72" width="1.9" height="5.88" fill="#14f014" />
<rect x="344.93" y="181.47" width="1.9" height="3.12" fill="#14f014" />
<rect x="348.05" y="183.83" width="1.9" height="0.77" fill="#14f014" />
<rect x="351.52" y="184.2" width="1.2" height="0.8" fill="#10c010" />
<rect x="354.65" y="184.2" width="1.2" height="0.8" fill="#10c010" />
<rect x="357.43" y="183.16" width="1.9" height="1.44" fill="#14f014" />
<rect x="360.55" y="183.72" width="1.9" height="0.88" fill="#14f014" />
<rect x="363.68" y="184.6" width="1.9" height="1.21" fill="#f01414" />
<rect x="366.8" y="184.6" width="1.9" height="2.25" fill="#f01414" />
<rect x="369.93" y="184.6" width="1.9" height="3.15" fill="#f01414" />
<rect x="373.05" y="184.6" width="1.9" height="3.33" fill="#f01414" />
<rect x="376.18" y="184.6" width="1.9" height="2.81" fill="#f01414" />
<rect x="379.3" y="184.6" width="1.9" height="2.08" fill="#f01414" />
<rect x="382.43" y="184.6" width="1.9" height="1.27" fill="#f01414" />
<rect x="385.55" y="184.6" width="1.9" height="0.75" fill="#f01414" />
<rect x="389.02" y="184.2" width="1.2" height="0.8" fill="#c01010" />
<rect x="392.15" y="184.2" width="1.2" height="0.8" fill="#c01010" />
<rect x="395.27" y="184.2" width="1.2" height="0.8" fill="#c01010" />
<rect x="398.4" y="184.2" width="1.2" height="0.8" fill="#c01010" />
<rect x="401.18" y="184.6" width="1.9" height="0.8" fill="#f01414" />
<rect x="404.3" y="184.6" width="1.9" height="1.75" fill="#f01414" />
<rect x="407.43" y="184.6" width="1.9" height="3.19" fill="#f01414" />
<rect x="410.55" y="184.6" width="1.9" height="4.33" fill="#f01414" />
<rect x="413.68" y="184.6" width="1.9" height="4.94" fill="#f01414" />
<rect x="416.8" y="184.6" width="1.9" height="4.08" fill="#f01414" />
<rect x="419.93" y="184.6" width="1.9" height="3.52" fill="#f01414" />
<rect x="423.05" y="184.6" width="1.9" height="3.0" fill="#f01414" />
<rect x="426.18" y="184.6" width="1.9" height="2.46" fill="#f01414" />
<rect x="429.3" y="184.6" width="1.9" height="1.36" fill="#f01414" />
<rect x="432.43" y="183.95" width="1.9" height="0.65" fill="#14f014" />
<rect x="435.55" y="184.6" width="1.9" height="1.75" fill="#f01414" />
<rect x="438.68" y="184.6" width="1.9" height="3.21" fill="#f01414" />
<rect x="441.8" y="184.6" width="1.9" height="4.0" fill="#f01414" />
<rect x="444.93" y="184.6" width="1.9" height="4.15" fill="#f01414" />
<rect x="448.05" y="184.6" width="1.9" height="4.67" fill="#f01414" />
<rect x="451.18" y="184.6" width="1.9" height="5.38" fill="#f01414" />
<rect x="454.3" y="184.6" width="1.9" height="6.42" fill="#f01414" />
<rect x="457.43" y="184.6" width="1.9" height="7.46" fill="#f01414" />
<rect x="460.55" y="184.6" width="1.9" height="8.5" fill="#f01414" />
<rect x="463.68" y="184.6" width="1.9" height="10.08" fill="#f01414" />
<rect x="466.8" y="184.6" width="1.9" height="12.05" fill="#f01414" />
<rect x="469.93" y="184.6" width="1.9" height="12.03" fill="#f01414" />
<rect x="473.05" y="184.6" width="1.9" height="10.0" fill="#f01414" />
<rect x="476.18" y="184.6" width="1.9" height="7.92" fill="#f01414" />
<rect x="479.3" y="184.6" width="1.9" height="5.83" fill="#f01414" />
<rect x="482.43" y="184.6" width="1.9" height="3.88" fill="#f01414" />
<rect x="485.55" y="184.6" width="1.9" height="2.92" fill="#f01414" />
<rect x="488.68" y="184.6" width="1.9" height="2.5" fill="#f01414" />
<rect x="491.8" y="184.6" width="1.9" height="2.5" fill="#f01414" />
<rect x="494.93" y="184.6" width="1.9" height="2.5" fill="#f01414" />
<rect x="498.05" y="184.6" width="1.9" height="2.5" fill="#f01414" />
<rect x="501.18" y="184.6" width="1.9" height="2.31" fill="#f01414" />
<rect x="504.3" y="184.6" width="1.9" height="1.79" fill="#f01414" />
<rect x="507.43" y="184.6" width="1.9" height="1.27" fill="#f01414" />
<rect x="510.9" y="184.2" width="1.2" height="0.8" fill="#10c010" />
<rect x="513.67" y="182.56" width="1.9" height="2.04" fill="#14f014" />
<rect x="516.8" y="181.81" width="1.9" height="2.79" fill="#14f014" />
<rect x="519.92" y="181.6" width="1.9" height="3.0" fill="#14f014" />
<rect x="523.05" y="181.6" width="1.9" height="3.0" fill="#14f014" />
<rect x="526.17" y="181.6" width="1.9" height="3.0" fill="#14f014" />
<rect x="529.3" y="181.6" width="1.9" height="3.0" fill="#14f014" />
<rect x="532.42" y="181.6" width="1.9" height="3.0" fill="#14f014" />
<rect x="535.55" y="181.6" width="1.9" height="3.0" fill="#14f014" />
<rect x="538.67" y="181.6" width="1.9" height="3.0" fill="#14f014" />
<rect x="541.8" y="181.6" width="1.9" height="3.0" fill="#14f014" />
<rect x="544.92" y="181.6" width="1.9" height="3.0" fill="#14f014" />
<rect x="548.05" y="181.6" width="1.9" height="3.0" fill="#14f014" />
<rect x="551.17" y="181.6" width="1.9" height="3.0" fill="#14f014" />
<rect x="554.3" y="181.6" width="1.9" height="3.0" fill="#14f014" />
<rect x="557.42" y="181.6" width="1.9" height="3.0" fill="#14f014" />
<rect x="560.55" y="181.6" width="1.9" height="3.0" fill="#14f014" />
<rect x="563.67" y="181.6" width="1.9" height="3.0" fill="#14f014" />
<rect x="566.8" y="181.6" width="1.9" height="3.0" fill="#14f014" />
<rect x="569.92" y="181.6" width="1.9" height="3.0" fill="#14f014" />
<rect x="573.05" y="181.6" width="1.9" height="3.0" fill="#14f014" />
<rect x="576.17" y="181.81" width="1.9" height="2.79" fill="#14f014" />
<rect x="579.3" y="182.12" width="1.9" height="2.48" fill="#14f014" />
<rect x="582.42" y="182.44" width="1.9" height="2.16" fill="#14f014" />
<rect x="585.55" y="182.75" width="1.9" height="1.85" fill="#14f014" />
<rect x="588.67" y="183.06" width="1.9" height="1.54" fill="#14f014" />
<rect x="591.8" y="183.38" width="1.9" height="1.23" fill="#14f014" />
<rect x="594.92" y="183.67" width="1.9" height="0.93" fill="#14f014" />
<rect x="598.05" y="183.92" width="1.9" height="0.68" fill="#14f014" />
<rect x="601.52" y="184.2" width="1.2" height="0.8" fill="#10c010" />
<rect x="604.3" y="184.6" width="1.9" height="0.62" fill="#f01414" />
<rect x="607.42" y="184.6" width="1.9" height="2.19" fill="#f01414" />
<rect x="610.55" y="184.6" width="1.9" height="3.5" fill="#f01414" />
<rect x="613.67" y="184.6" width="1.9" height="4.54" fill="#f01414" />
<rect x="616.8" y="184.6" width="1.9" height="5.58" fill="#f01414" />
<rect x="619.92" y="184.6" width="1.9" height="6.31" fill="#f01414" />
<rect x="623.05" y="184.6" width="1.9" height="5.83" fill="#f01414" />
<rect x="626.17" y="184.6" width="1.9" height="5.15" fill="#f01414" />
<rect x="629.3" y="184.6" width="1.9" height="4.25" fill="#f01414" />
<rect x="632.42" y="184.6" width="1.9" height="3.6" fill="#f01414" />
<rect x="635.55" y="184.6" width="1.9" height="3.08" fill="#f01414" />
<rect x="638.67" y="184.6" width="1.9" height="2.12" fill="#f01414" />
<rect x="641.8" y="184.6" width="1.9" height="1.54" fill="#f01414" />
<rect x="644.92" y="184.6" width="1.9" height="1.02" fill="#f01414" />
<rect x="648.05" y="184.6" width="1.9" height="2.0" fill="#f01414" />
</g>
<text x="724.4" y="168.6" font-size="5.4" fill="#c8c8c8" font-family="Liberation Sans, sans-serif" stroke="#c8c8c8" stroke-width="0.06" textLength="22.5" lengthAdjust="spacingAndGlyphs" >13.134347</text>
<text x="724.4" y="186.3" font-size="5.4" fill="#c8c8c8" font-family="Liberation Sans, sans-serif" stroke="#c8c8c8" stroke-width="0.06" textLength="19.5" lengthAdjust="spacingAndGlyphs" >0.000000</text>
<text x="724.4" y="207.6" font-size="5.4" fill="#c8c8c8" font-family="Liberation Sans, sans-serif" stroke="#c8c8c8" stroke-width="0.06" textLength="26" lengthAdjust="spacingAndGlyphs" >-15.227056</text>
<line x1="722.6" y1="166.9" x2="724" y2="166.9" stroke="#9a9a9a" stroke-width="0.6" />
<line x1="722.6" y1="184.6" x2="724" y2="184.6" stroke="#9a9a9a" stroke-width="0.6" />
<line x1="722.6" y1="205.9" x2="724" y2="205.9" stroke="#9a9a9a" stroke-width="0.6" />
<line x1="1.8" y1="208" x2="1.8" y2="209.6" stroke="#9a9a9a" stroke-width="0.6" />
<text x="2.6" y="214.5" font-size="5.4" fill="#c8c8c8" font-family="Liberation Sans, sans-serif" stroke="#c8c8c8" stroke-width="0.06" textLength="22.5" lengthAdjust="spacingAndGlyphs" >7 Jan 2019</text>
<line x1="51.8" y1="208" x2="51.8" y2="209.6" stroke="#9a9a9a" stroke-width="0.6" />
<text x="52.0" y="214.5" font-size="5.4" fill="#c8c8c8" font-family="Liberation Sans, sans-serif" stroke="#c8c8c8" stroke-width="0.06" textLength="23.5" lengthAdjust="spacingAndGlyphs" >8 Jan 03:00</text>
<line x1="101.8" y1="208" x2="101.8" y2="209.6" stroke="#9a9a9a" stroke-width="0.6" />
<text x="102.0" y="214.5" font-size="5.4" fill="#c8c8c8" font-family="Liberation Sans, sans-serif" stroke="#c8c8c8" stroke-width="0.06" textLength="23.5" lengthAdjust="spacingAndGlyphs" >8 Jan 07:00</text>
<line x1="151.8" y1="208" x2="151.8" y2="209.6" stroke="#9a9a9a" stroke-width="0.6" />
<text x="152.0" y="214.5" font-size="5.4" fill="#c8c8c8" font-family="Liberation Sans, sans-serif" stroke="#c8c8c8" stroke-width="0.06" textLength="23.5" lengthAdjust="spacingAndGlyphs" >8 Jan 11:00</text>
<line x1="201.8" y1="208" x2="201.8" y2="209.6" stroke="#9a9a9a" stroke-width="0.6" />
<text x="202.0" y="214.5" font-size="5.4" fill="#c8c8c8" font-family="Liberation Sans, sans-serif" stroke="#c8c8c8" stroke-width="0.06" textLength="23.5" lengthAdjust="spacingAndGlyphs" >8 Jan 15:00</text>
<line x1="251.8" y1="208" x2="251.8" y2="209.6" stroke="#9a9a9a" stroke-width="0.6" />
<text x="252.0" y="214.5" font-size="5.4" fill="#c8c8c8" font-family="Liberation Sans, sans-serif" stroke="#c8c8c8" stroke-width="0.06" textLength="23.5" lengthAdjust="spacingAndGlyphs" >8 Jan 19:00</text>
<line x1="301.8" y1="208" x2="301.8" y2="209.6" stroke="#9a9a9a" stroke-width="0.6" />
<text x="302.0" y="214.5" font-size="5.4" fill="#c8c8c8" font-family="Liberation Sans, sans-serif" stroke="#c8c8c8" stroke-width="0.06" textLength="23.5" lengthAdjust="spacingAndGlyphs" >8 Jan 23:00</text>
<line x1="351.8" y1="208" x2="351.8" y2="209.6" stroke="#9a9a9a" stroke-width="0.6" />
<text x="352.0" y="214.5" font-size="5.4" fill="#c8c8c8" font-family="Liberation Sans, sans-serif" stroke="#c8c8c8" stroke-width="0.06" textLength="23.5" lengthAdjust="spacingAndGlyphs" >9 Jan 03:00</text>
<line x1="401.8" y1="208" x2="401.8" y2="209.6" stroke="#9a9a9a" stroke-width="0.6" />
<text x="402.0" y="214.5" font-size="5.4" fill="#c8c8c8" font-family="Liberation Sans, sans-serif" stroke="#c8c8c8" stroke-width="0.06" textLength="23.5" lengthAdjust="spacingAndGlyphs" >9 Jan 07:00</text>
<line x1="451.8" y1="208" x2="451.8" y2="209.6" stroke="#9a9a9a" stroke-width="0.6" />
<text x="452.0" y="214.5" font-size="5.4" fill="#c8c8c8" font-family="Liberation Sans, sans-serif" stroke="#c8c8c8" stroke-width="0.06" textLength="23.5" lengthAdjust="spacingAndGlyphs" >9 Jan 11:00</text>
<line x1="501.8" y1="208" x2="501.8" y2="209.6" stroke="#9a9a9a" stroke-width="0.6" />
<text x="502.0" y="214.5" font-size="5.4" fill="#c8c8c8" font-family="Liberation Sans, sans-serif" stroke="#c8c8c8" stroke-width="0.06" textLength="23.5" lengthAdjust="spacingAndGlyphs" >9 Jan 15:00</text>
<line x1="551.8" y1="208" x2="551.8" y2="209.6" stroke="#9a9a9a" stroke-width="0.6" />
<text x="552.0" y="214.5" font-size="5.4" fill="#c8c8c8" font-family="Liberation Sans, sans-serif" stroke="#c8c8c8" stroke-width="0.06" textLength="23.5" lengthAdjust="spacingAndGlyphs" >9 Jan 19:00</text>
<line x1="601.8" y1="208" x2="601.8" y2="209.6" stroke="#9a9a9a" stroke-width="0.6" />
<text x="602.0" y="214.5" font-size="5.4" fill="#c8c8c8" font-family="Liberation Sans, sans-serif" stroke="#c8c8c8" stroke-width="0.06" textLength="23.5" lengthAdjust="spacingAndGlyphs" >9 Jan 23:00</text>
<rect x="6.9" y="46.4" width="53.9" height="69.2" fill="#808080" stroke="#dedede" stroke-width="0.9" />
<rect x="7.3" y="46.9" width="53.1" height="8.6" fill="#f2f2f2" />
<clipPath id="pclip"><rect x="6.8" y="46.9" width="53.4" height="69"/></clipPath><g clip-path="url(#pclip)">
<text x="8.6" y="53.3" font-size="6.6" fill="#1a1a1a" font-family="Liberation Sans, sans-serif" stroke="#1a1a1a" stroke-width="0.32" textLength="52.5" lengthAdjust="spacingAndGlyphs" >FA_Test_v1_6_×1</text>
<path d="M13.2 66.6 L23 60.2 M14 67 q1.2-3 4.4-3.2 q2.6 0 2.8 2.8 M12.2 67.9h9.6" fill="none" stroke="#ececec" stroke-width="0.65"/>
<text x="24.5" y="67" font-size="9.6" fill="#f4f4f4" font-family="Liberation Sans, sans-serif" stroke="#f4f4f4" stroke-width="0.25" textLength="22.7" lengthAdjust="spacingAndGlyphs" >13:35</text>
<text x="8.6" y="77.8" font-size="9.6" fill="#f4f4f4" font-family="Liberation Sans, sans-serif" stroke="#f4f4f4" stroke-width="0.25" textLength="48.5" lengthAdjust="spacingAndGlyphs" >No position</text>
<text x="8.6" y="89.2" font-size="9.6" fill="#f4f4f4" font-family="Liberation Sans, sans-serif" stroke="#f4f4f4" stroke-width="0.25" textLength="61" lengthAdjust="spacingAndGlyphs" >№: 1000-1000</text>
<text x="8.6" y="100.6" font-size="9.6" fill="#f4f4f4" font-family="Liberation Sans, sans-serif" stroke="#f4f4f4" stroke-width="0.25" textLength="24.5" lengthAdjust="spacingAndGlyphs" >$: 0.0</text>
<line x1="7.4" y1="68.7" x2="60.4" y2="68.7" stroke="#f2f2f2" stroke-width="0.85" stroke-dasharray="2.2 0.8"/>
<line x1="7.4" y1="80.4" x2="60.4" y2="80.4" stroke="#f2f2f2" stroke-width="0.85" stroke-dasharray="2.2 0.8"/>
<line x1="7.4" y1="91.6" x2="60.4" y2="91.6" stroke="#f2f2f2" stroke-width="0.85" stroke-dasharray="2.2 0.8"/>
<line x1="7.4" y1="102.8" x2="60.4" y2="102.8" stroke="#f2f2f2" stroke-width="0.85" stroke-dasharray="2.2 0.8"/>
<circle cx="14.1" cy="109.5" r="4.4" fill="none" stroke="#efefef" stroke-width="0.75"/><circle cx="12.6" cy="108.3" r="0.6" fill="#f4f4f4"/><circle cx="15.5" cy="108.3" r="0.6" fill="#f4f4f4"/><path d="M11.9 112.1q2.2-2.6 4.4 0" fill="none" stroke="#efefef" stroke-width="0.65"/>
<path d="M20.4 112.3v-3.2l1.3-1.4v-2q1.2-0.4 1.3 0.9v1.7h1.7q0.9 0.2 0.7 1l-0.5 2.4q-0.2 0.7-1 0.7z M21.7 109.2v2.6" fill="none" stroke="#e6e6e6" stroke-width="0.6"/>
<path d="M30.2 112.9 L38.8 107.2 M31 113.2 q1-2.8 4-3 q2.4 0 2.6 2.6 M29.2 113.9h8.6" fill="none" stroke="#ececec" stroke-width="0.65"/>
</g>
<rect x="0" y="217.6" width="750" height="176.4" fill="#ffffff" />
<rect x="0" y="217.6" width="750" height="2.4" fill="#f0f0f0" />
<rect x="0" y="217.6" width="8.6" height="176" fill="#f0f0f0" />
<line x1="8.6" y1="220" x2="750" y2="220" stroke="#d4d4d4" stroke-width="0.5" />
<rect x="2" y="227.2" width="5.4" height="165.2" fill="#a6c3e4" />
<line x1="8.3" y1="220" x2="8.3" y2="392" stroke="#d0d0d0" stroke-width="0.6" />
<path d="M2.9 220.9l3 3M5.9 220.9l-3 3" stroke="#111" stroke-width="1"/>
<text transform="translate(6.7 391.7) rotate(-90)" font-size="5.6" fill="#1a2060" stroke="#1a2060" stroke-width="0.1" font-family="Liberation Sans, sans-serif" textLength="36.3" lengthAdjust="spacingAndGlyphs">Strategy Tester</text>
<rect x="22.7" y="225" width="48.3" height="8.6" fill="#cdcdcd" />
<text x="24.3" y="231.4" font-size="6.2" fill="#787878" font-family="Liberation Serif, serif" stroke="#787878" stroke-width="0.08" textLength="15.3" lengthAdjust="spacingAndGlyphs" >Expert</text>
<path d="M65.7 228.5l1.6 1.6 1.6-1.6" fill="none" stroke="#9c9c9c" stroke-width="0.55"/>
<rect x="75" y="225" width="175.6" height="8.6" fill="#cdcdcd" />
<text x="76.6" y="231.4" font-size="6.2" fill="#787878" font-family="Liberation Serif, serif" stroke="#787878" stroke-width="0.08" textLength="50.5" lengthAdjust="spacingAndGlyphs" >FA_Test_v1_6__1.ex5</text>
<path d="M245.29999999999998 228.5l1.6 1.6 1.6-1.6" fill="none" stroke="#9c9c9c" stroke-width="0.55"/>
<rect x="253.8" y="225" width="117.59999999999997" height="8.6" fill="#ececec" stroke="#dadada" stroke-width="0.5" />
<rect x="362.0" y="225.25" width="9.15" height="8.1" fill="#fff" />
<text x="255.4" y="231.4" font-size="6.2" fill="#787878" font-family="Liberation Serif, serif" stroke="#787878" stroke-width="0.08" textLength="21" lengthAdjust="spacingAndGlyphs" >EURUSD</text>
<path d="M366.09999999999997 228.5l1.6 1.6 1.6-1.6" fill="none" stroke="#9c9c9c" stroke-width="0.55"/>
<rect x="375" y="225" width="58.39999999999998" height="8.6" fill="#cdcdcd" />
<text x="376.6" y="231.4" font-size="6.2" fill="#787878" font-family="Liberation Serif, serif" stroke="#787878" stroke-width="0.08" textLength="7" lengthAdjust="spacingAndGlyphs" >M5</text>
<path d="M428.09999999999997 228.5l1.6 1.6 1.6-1.6" fill="none" stroke="#9c9c9c" stroke-width="0.55"/>
<text x="71.2" y="244.6" text-anchor="end" font-size="6.2" fill="#222" stroke="#222" stroke-width="0.12" font-family="Liberation Serif, serif" textLength="12" lengthAdjust="spacingAndGlyphs">Date:</text>
<rect x="75" y="238.4" width="175.6" height="8.6" fill="#cdcdcd" />
<text x="76.6" y="244.8" font-size="6.2" fill="#787878" font-family="Liberation Serif, serif" stroke="#787878" stroke-width="0.08" textLength="33" lengthAdjust="spacingAndGlyphs" >Custom period</text>
<path d="M245.29999999999998 241.9l1.6 1.6 1.6-1.6" fill="none" stroke="#9c9c9c" stroke-width="0.55"/>
<rect x="253.9" y="238.1" width="57.29999999999998" height="9.3" fill="#fff" stroke="#9c9c9c" stroke-width="0.6" />
<text x="254.3" y="244.8" font-size="6.2" fill="#6a6a6a" font-family="Liberation Serif, serif" stroke="#6a6a6a" stroke-width="0.08" textLength="25.6" lengthAdjust="spacingAndGlyphs" >2018.01.01</text>
<rect x="298.0" y="240.1" width="5.4" height="5.2" fill="#f6f6f6" stroke="#c4c4c4" stroke-width="0.5" />
<path d="M305.2 242.0h2.8l-1.4 1.6z" fill="#777"/>
<rect x="314.1" y="238.1" width="57.19999999999999" height="9.3" fill="#fff" stroke="#9c9c9c" stroke-width="0.6" />
<text x="314.5" y="244.8" font-size="6.2" fill="#6a6a6a" font-family="Liberation Serif, serif" stroke="#6a6a6a" stroke-width="0.08" textLength="25.6" lengthAdjust="spacingAndGlyphs" >2018.12.31</text>
<rect x="358.1" y="240.1" width="5.4" height="5.2" fill="#f6f6f6" stroke="#c4c4c4" stroke-width="0.5" />
<path d="M365.3 242.0h2.8l-1.4 1.6z" fill="#777"/>
<text x="71.2" y="258.0" text-anchor="end" font-size="6.2" fill="#222" stroke="#222" stroke-width="0.12" font-family="Liberation Serif, serif" textLength="20" lengthAdjust="spacingAndGlyphs">Forward:</text>
<rect x="75" y="251.8" width="58.400000000000006" height="8.6" fill="#cdcdcd" />
<text x="76.6" y="258.2" font-size="6.2" fill="#787878" font-family="Liberation Serif, serif" stroke="#787878" stroke-width="0.08" textLength="6.5" lengthAdjust="spacingAndGlyphs" >No</text>
<path d="M128.1 255.3l1.6 1.6 1.6-1.6" fill="none" stroke="#9c9c9c" stroke-width="0.55"/>
<rect x="137.2" y="251.5" width="58.400000000000006" height="9.3" fill="#fff" stroke="#9c9c9c" stroke-width="0.6" />
<text x="137.6" y="258.2" font-size="6.2" fill="#6a6a6a" font-family="Liberation Serif, serif" stroke="#6a6a6a" stroke-width="0.08" textLength="25.6" lengthAdjust="spacingAndGlyphs" >2019.01.09</text>
<rect x="182.4" y="253.5" width="5.4" height="5.2" fill="#f6f6f6" stroke="#c4c4c4" stroke-width="0.5" />
<path d="M189.6 255.4h2.8l-1.4 1.6z" fill="#777"/>
<text x="71.2" y="270.8" text-anchor="end" font-size="6.2" fill="#222" stroke="#222" stroke-width="0.12" font-family="Liberation Serif, serif" textLength="24" lengthAdjust="spacingAndGlyphs">Execution:</text>
<rect x="75" y="264.6" width="175.6" height="8.6" fill="#ececec" stroke="#dadada" stroke-width="0.5" />
<rect x="241.2" y="264.85" width="9.15" height="8.1" fill="#fff" />
<text x="76.6" y="271.0" font-size="6.2" fill="#787878" font-family="Liberation Serif, serif" stroke="#787878" stroke-width="0.08" textLength="13.5" lengthAdjust="spacingAndGlyphs" >90 ms</text>
<path d="M245.29999999999998 268.1l1.6 1.6 1.6-1.6" fill="none" stroke="#9c9c9c" stroke-width="0.55"/>
<rect x="253.8" y="264.6" width="117.59999999999997" height="8.6" fill="#cdcdcd" />
<text x="255.4" y="271.0" font-size="6.2" fill="#787878" font-family="Liberation Serif, serif" stroke="#787878" stroke-width="0.08" textLength="38" lengthAdjust="spacingAndGlyphs" >Open prices only</text>
<path d="M366.09999999999997 268.1l1.6 1.6 1.6-1.6" fill="none" stroke="#9c9c9c" stroke-width="0.55"/>
<text x="71.2" y="284.2" text-anchor="end" font-size="6.2" fill="#222" stroke="#222" stroke-width="0.12" font-family="Liberation Serif, serif" textLength="18.5" lengthAdjust="spacingAndGlyphs">Deposit:</text>
<rect x="75" y="278" width="58.400000000000006" height="8.6" fill="#ececec" stroke="#dadada" stroke-width="0.5" />
<rect x="124.0" y="278.25" width="9.15" height="8.1" fill="#fff" />
<text x="76.6" y="284.4" font-size="6.2" fill="#787878" font-family="Liberation Serif, serif" stroke="#787878" stroke-width="0.08" textLength="11" lengthAdjust="spacingAndGlyphs" >1000</text>
<path d="M128.1 281.5l1.6 1.6 1.6-1.6" fill="none" stroke="#9c9c9c" stroke-width="0.55"/>
<rect x="137.2" y="278" width="36.900000000000006" height="8.6" fill="#ececec" stroke="#dadada" stroke-width="0.5" />
<rect x="164.7" y="278.25" width="9.15" height="8.1" fill="#fff" />
<text x="138.79999999999998" y="284.4" font-size="6.2" fill="#787878" font-family="Liberation Serif, serif" stroke="#787878" stroke-width="0.08" textLength="10" lengthAdjust="spacingAndGlyphs" >USD</text>
<path d="M168.79999999999998 281.5l1.6 1.6 1.6-1.6" fill="none" stroke="#9c9c9c" stroke-width="0.55"/>
<rect x="213.4" y="278" width="37.19999999999999" height="8.6" fill="#ececec" stroke="#dadada" stroke-width="0.5" />
<rect x="241.2" y="278.25" width="9.15" height="8.1" fill="#fff" />
<text x="215.0" y="284.4" font-size="6.2" fill="#787878" font-family="Liberation Serif, serif" stroke="#787878" stroke-width="0.08" textLength="15" lengthAdjust="spacingAndGlyphs" >1:1000</text>
<path d="M245.29999999999998 281.5l1.6 1.6 1.6-1.6" fill="none" stroke="#9c9c9c" stroke-width="0.55"/>
<text x="363.2" y="284.6" text-anchor="end" font-size="6.2" fill="#555" stroke="#555" stroke-width="0" font-family="Liberation Serif, serif" textLength="29.3" lengthAdjust="spacingAndGlyphs">Visualization</text>
<rect x="364.9" y="280" width="5.8" height="6" fill="#fff" stroke="#b4b4b4" stroke-width="0.5" />
<text x="71.2" y="301.2" text-anchor="end" font-size="6.2" fill="#222" stroke="#222" stroke-width="0.12" font-family="Liberation Serif, serif" textLength="30" lengthAdjust="spacingAndGlyphs">Optimization:</text>
<rect x="75" y="295" width="175.6" height="8.6" fill="#cdcdcd" />
<text x="76.6" y="301.4" font-size="6.2" fill="#787878" font-family="Liberation Serif, serif" stroke="#787878" stroke-width="0.08" textLength="63.5" lengthAdjust="spacingAndGlyphs" >Fast genetic based algorithm</text>
<path d="M245.29999999999998 298.5l1.6 1.6 1.6-1.6" fill="none" stroke="#9c9c9c" stroke-width="0.55"/>
<rect x="253.8" y="295" width="117.59999999999997" height="8.6" fill="#cdcdcd" />
<text x="255.4" y="301.4" font-size="6.2" fill="#787878" font-family="Liberation Serif, serif" stroke="#787878" stroke-width="0.08" textLength="28" lengthAdjust="spacingAndGlyphs" >Balance max</text>
<path d="M366.09999999999997 298.5l1.6 1.6 1.6-1.6" fill="none" stroke="#9c9c9c" stroke-width="0.55"/>
<text x="45" y="375.2" font-size="6.2" fill="#222" font-family="Liberation Serif, serif" stroke="#222" stroke-width="0.06" textLength="26" lengthAdjust="spacingAndGlyphs" >125 / 10496</text>
<rect x="75" y="368.8" width="591" height="9.2" fill="#e6e6e6" />
<rect x="75" y="368.8" width="6.6" height="9.2" fill="#06b025" />
<rect x="670.8" y="367.8" width="72.2" height="10.4" fill="#e1e1e1" stroke="#0078d7" stroke-width="0.9" />
<text x="701" y="375.2" font-size="6" fill="#000" font-family="Liberation Sans, sans-serif" stroke="#000" stroke-width="0.06" textLength="11.5" lengthAdjust="spacingAndGlyphs" >Start</text>
<rect x="8.3" y="382.8" width="742" height="10.8" fill="#f0f0f0" />
<line x1="41.4" y1="382.5" x2="750" y2="382.5" stroke="#9c9c9c" stroke-width="0.9" />
<rect x="9.2" y="382.2" width="32.2" height="9.4" fill="#fff" />
<path d="M9.2 382V391.6H41.4V382" fill="none" stroke="#4a4a4a" stroke-width="0.7"/>
<line x1="0" y1="393.9" x2="750" y2="393.9" stroke="#fafafa" stroke-width="1" />
<line x1="0" y1="394.8" x2="750" y2="394.8" stroke="#d4d4d4" stroke-width="0.7" />
<text x="15" y="389" font-size="6" fill="#222" font-family="Liberation Sans, sans-serif" stroke="#222" stroke-width="0.06" textLength="21.5" lengthAdjust="spacingAndGlyphs" >Settings</text>
<text x="46" y="389" font-size="6" fill="#8c8c8c" font-family="Liberation Sans, sans-serif" stroke="#8c8c8c" stroke-width="0.1" textLength="17" lengthAdjust="spacingAndGlyphs" >Inputs</text>
<text x="73" y="389" font-size="6" fill="#8c8c8c" font-family="Liberation Sans, sans-serif" stroke="#8c8c8c" stroke-width="0.1" textLength="55.5" lengthAdjust="spacingAndGlyphs" >Optimization Results</text>
<text x="139" y="389" font-size="6" fill="#8c8c8c" font-family="Liberation Sans, sans-serif" stroke="#8c8c8c" stroke-width="0.1" textLength="53.5" lengthAdjust="spacingAndGlyphs" >Optimization Graph</text>
<text x="202" y="389" font-size="6" fill="#8c8c8c" font-family="Liberation Sans, sans-serif" stroke="#8c8c8c" stroke-width="0.1" textLength="20" lengthAdjust="spacingAndGlyphs" >Agents</text>
<text x="231" y="389" font-size="6" fill="#8c8c8c" font-family="Liberation Sans, sans-serif" stroke="#8c8c8c" stroke-width="0.1" textLength="19.5" lengthAdjust="spacingAndGlyphs" >Journal</text>
<line x1="68" y1="384.6" x2="68" y2="391" stroke="#a8a8a8" stroke-width="0.6" />
<line x1="133.5" y1="384.6" x2="133.5" y2="391" stroke="#a8a8a8" stroke-width="0.6" />
<line x1="197" y1="384.6" x2="197" y2="391" stroke="#a8a8a8" stroke-width="0.6" />
<line x1="226.5" y1="384.6" x2="226.5" y2="391" stroke="#a8a8a8" stroke-width="0.6" />
<line x1="255.5" y1="384.6" x2="255.5" y2="391" stroke="#a8a8a8" stroke-width="0.6" />
<path d="M724 388.4l1.6-1.6v3.2zM731.6 386.8l1.6 1.6-1.6 1.6z" fill="#aaa"/><path d="M737.6 386.6l2.8 2.8M740.4 386.6l-2.8 2.8" stroke="#555" stroke-width="0.6"/>
<rect x="0" y="395" width="750" height="11" fill="#f0f0f0" />
<text x="2" y="403.1" font-size="6" fill="#222" font-family="Liberation Sans, sans-serif" stroke="#222" stroke-width="0.06" textLength="47" lengthAdjust="spacingAndGlyphs" >For Help, press F1</text>
<text x="391" y="403.1" font-size="6" fill="#222" font-family="Liberation Sans, sans-serif" stroke="#222" stroke-width="0.06" textLength="20" lengthAdjust="spacingAndGlyphs" >Default</text>
<line x1="388.5" y1="396.6" x2="388.5" y2="405" stroke="#d0d0d0" stroke-width="0.6" />
<line x1="389.2" y1="396.6" x2="389.2" y2="405" stroke="#fcfcfc" stroke-width="0.6" />
<line x1="455" y1="396.6" x2="455" y2="405" stroke="#d0d0d0" stroke-width="0.6" />
<line x1="455.7" y1="396.6" x2="455.7" y2="405" stroke="#fcfcfc" stroke-width="0.6" />
<line x1="507.5" y1="396.6" x2="507.5" y2="405" stroke="#d0d0d0" stroke-width="0.6" />
<line x1="508.2" y1="396.6" x2="508.2" y2="405" stroke="#fcfcfc" stroke-width="0.6" />
<line x1="545" y1="396.6" x2="545" y2="405" stroke="#d0d0d0" stroke-width="0.6" />
<line x1="545.7" y1="396.6" x2="545.7" y2="405" stroke="#fcfcfc" stroke-width="0.6" />
<line x1="582.5" y1="396.6" x2="582.5" y2="405" stroke="#d0d0d0" stroke-width="0.6" />
<line x1="583.2" y1="396.6" x2="583.2" y2="405" stroke="#fcfcfc" stroke-width="0.6" />
<line x1="618.8" y1="396.6" x2="618.8" y2="405" stroke="#d0d0d0" stroke-width="0.6" />
<line x1="619.5" y1="396.6" x2="619.5" y2="405" stroke="#fcfcfc" stroke-width="0.6" />
<line x1="655" y1="396.6" x2="655" y2="405" stroke="#d0d0d0" stroke-width="0.6" />
<line x1="655.7" y1="396.6" x2="655.7" y2="405" stroke="#fcfcfc" stroke-width="0.6" />
<line x1="691.2" y1="396.6" x2="691.2" y2="405" stroke="#d0d0d0" stroke-width="0.6" />
<line x1="691.9000000000001" y1="396.6" x2="691.9000000000001" y2="405" stroke="#fcfcfc" stroke-width="0.6" />
<rect x="693" y="396.8" width="5" height="7" fill="#3a90e0" stroke="#2a6ab8" stroke-width="0.4" rx="1"/>
<circle cx="698.6" cy="402.8" r="1.9" fill="#3ab03a" stroke="#fff" stroke-width="0.3"/>
<text x="703.6" y="403.1" font-size="6" fill="#222" font-family="Liberation Sans, sans-serif" stroke="#222" stroke-width="0.06" textLength="37.4" lengthAdjust="spacingAndGlyphs" >128 / 1318 Kb</text>
<g id="mag">
<path d="M727.4 384.8L734.6 392.2" stroke="#fff" stroke-width="6.4" stroke-linecap="round"/>
<circle cx="719.85" cy="377.1" r="9.45" fill="#f5f5f5" stroke="#fff" stroke-width="5.4"/>
<path d="M727.4 384.8L734.6 392.2" stroke="#3a3a3a" stroke-width="3.6" stroke-linecap="round"/>
<circle cx="719.85" cy="377.1" r="9.45" fill="none" stroke="#3a3a3a" stroke-width="2.8"/>
<path d="M714.65 377.1h10.4M719.85 371.9v10.4" stroke="#3a3a3a" stroke-width="3"/>
</g>
</svg></body></html>
